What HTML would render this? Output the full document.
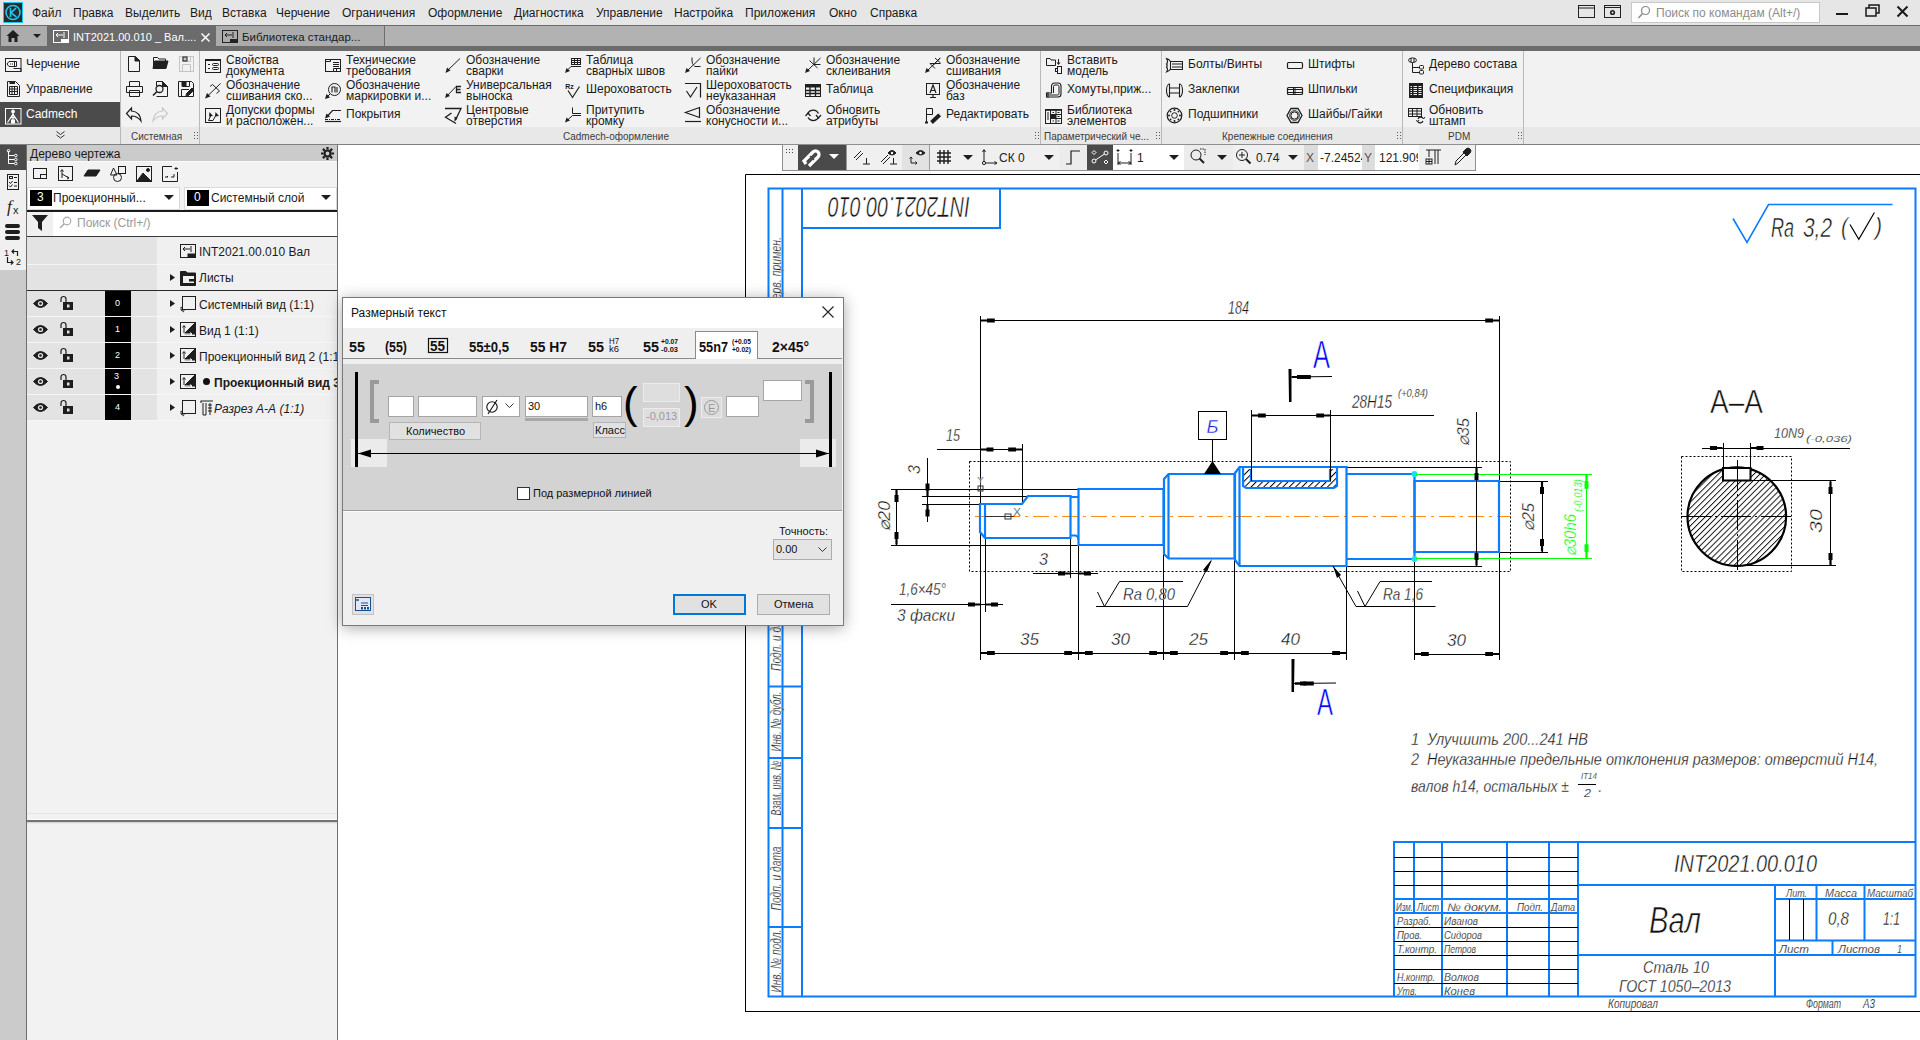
<!DOCTYPE html>
<html><head><meta charset="utf-8"><title>KOMPAS</title>
<style>
html,body{margin:0;padding:0;width:1920px;height:1040px;overflow:hidden;background:#fff;}
body{position:relative;font-family:"Liberation Sans",sans-serif;color:#000;}
.a{position:absolute;}
.t{position:absolute;white-space:nowrap;}
svg{position:absolute;overflow:visible;}

.menu{left:0;top:0;width:1920px;height:25px;background:#e6e6e6;}
.mi{font-size:12px;top:6px;color:#1a1a1a;}
.tabbar{left:0;top:25px;width:1920px;height:26px;background:#b2b2b2;}
.ribbon{left:0;top:51px;width:1920px;height:94px;background:#f2f2f2;}
.rlab{left:0;top:127px;width:1920px;height:17px;background:#e8e8e8;}
.rt{font-size:12px;line-height:11px;color:#1a1a1a;}
.gl{font-size:10px;color:#3c3c3c;top:131px;}
.sep{top:51px;width:1px;height:93px;background:#b9b9b9;}
.grip{width:6px;height:10px;top:131px;background-image:radial-gradient(circle,#555 0.8px,transparent 1px);background-size:3px 3px;}



.pt{font-size:12px;color:#1a1a1a;margin-top:1px;}





.dlg{left:342px;top:297px;width:502px;height:329px;background:#f0f0f0;border:1px solid #7a7a7a;box-sizing:border-box;box-shadow:0 2px 14px rgba(0,0,0,0.34);}
.ib{position:absolute;background:#fff;border:1px solid #a5a5a5;box-sizing:border-box;}
.dt{font-size:11px;color:#111;position:absolute;white-space:nowrap;}

</style></head><body>
<div class="a menu"></div>
<div class="a" style="left:3px;top:2px;width:18px;height:19px;background:#2a2a2a;border:1px solid #1ec8f0;"></div>
<svg style="left:4px;top:3px" width="18" height="19" viewBox="0 0 18 19"><circle cx="9" cy="9.5" r="7" fill="none" stroke="#1ec8f0" stroke-width="1.6"/><path d="M6.5 5 V14 M12 5 L7 9.8 L12.5 14" fill="none" stroke="#1ec8f0" stroke-width="1.6"/></svg>
<div class="t mi" style="left:32px">Файл</div>
<div class="t mi" style="left:73px">Правка</div>
<div class="t mi" style="left:125px">Выделить</div>
<div class="t mi" style="left:190px">Вид</div>
<div class="t mi" style="left:222px">Вставка</div>
<div class="t mi" style="left:276px">Черчение</div>
<div class="t mi" style="left:342px">Ограничения</div>
<div class="t mi" style="left:428px">Оформление</div>
<div class="t mi" style="left:514px">Диагностика</div>
<div class="t mi" style="left:596px">Управление</div>
<div class="t mi" style="left:674px">Настройка</div>
<div class="t mi" style="left:745px">Приложения</div>
<div class="t mi" style="left:829px">Окно</div>
<div class="t mi" style="left:870px">Справка</div>
<svg style="left:1578px;top:5px" width="18" height="14"><rect x="0.5" y="0.5" width="16" height="12" fill="none" stroke="#222" stroke-width="1"/><line x1="0" y1="3" x2="17" y2="3" stroke="#222"/></svg>
<svg style="left:1604px;top:5px" width="18" height="14"><rect x="0.5" y="0.5" width="16" height="12" fill="none" stroke="#222" stroke-width="1"/><line x1="0" y1="2.5" x2="17" y2="2.5" stroke="#222"/><circle cx="8.5" cy="7.5" r="2.6" fill="#222"/><circle cx="8.5" cy="7.5" r="1" fill="#e6e6e6"/></svg>
<div class="a" style="left:1631px;top:2px;width:189px;height:21px;background:#fff;border:1px solid #c8c8c8;box-sizing:border-box;"></div>
<svg style="left:1637px;top:5px" width="14" height="15"><circle cx="8.5" cy="5.5" r="4" fill="none" stroke="#888" stroke-width="1.2"/><line x1="5.5" y1="8.5" x2="1.5" y2="13" stroke="#888" stroke-width="1.4"/></svg>
<div class="t" style="left:1656px;top:6px;font-size:12px;color:#8c8c8c">Поиск по командам (Alt+/)</div>
<div class="a" style="left:1836px;top:13px;width:12px;height:2px;background:#1a1a1a"></div>
<svg style="left:1865px;top:4px" width="16" height="14"><rect x="1" y="4" width="10" height="8" fill="none" stroke="#1a1a1a" stroke-width="1.5"/><path d="M4 4 V1 H14 V9 H11" fill="none" stroke="#1a1a1a" stroke-width="1.5"/></svg>
<svg style="left:1896px;top:5px" width="14" height="14"><path d="M1.5 1.5 L11.5 11.5 M11.5 1.5 L1.5 11.5" stroke="#1a1a1a" stroke-width="2"/></svg>
<div class="a tabbar"></div>
<div class="a" style="left:0;top:25px;width:216px;height:21px;background:#6b6b6b"></div>
<div class="a" style="left:0;top:46px;width:1920px;height:5px;background:#6b6b6b"></div>
<div class="a" style="left:0;top:25px;width:1920px;height:1px;background:#6b6b6b"></div>
<div class="a" style="left:1px;top:26px;width:46px;height:20px;background:#acacac"></div>
<svg style="left:6px;top:29px" width="14" height="14"><path d="M0.5 7 L7 1 L13.5 7 H11.5 V13 H8.5 V9 H5.5 V13 H2.5 V7 Z" fill="#1e1e1e"/></svg>
<svg style="left:33px;top:34px" width="8" height="5"><path d="M0 0 H8 L4 4 Z" fill="#1e1e1e"/></svg>
<svg style="left:53px;top:30px" width="17" height="14"><rect x="0.5" y="0.5" width="15" height="12" fill="none" stroke="#fff"/><rect x="8" y="9" width="7" height="3" fill="#fff"/><path d="M3 5 H10 M3 5 L5 3 M3 5 L5 7 M11 2 V8" stroke="#fff" fill="none"/></svg>
<div class="t" style="left:73px;top:31px;font-size:11px;color:#fff">INT2021.00.010 _ Вал....</div>
<svg style="left:201px;top:33px" width="9" height="9"><path d="M0.5 0.5 L8.5 8.5 M8.5 0.5 L0.5 8.5" stroke="#fff" stroke-width="1.5"/></svg>
<div class="a" style="left:216px;top:26px;width:168px;height:20px;background:#ababab"></div>
<div class="a" style="left:384px;top:26px;width:1px;height:20px;background:#6e6e6e"></div>
<svg style="left:222px;top:30px" width="17" height="14"><rect x="0.5" y="0.5" width="15" height="12" fill="none" stroke="#222"/><rect x="8" y="9" width="7" height="3" fill="#222"/><path d="M3 5 H10 M3 5 L5 3 M3 5 L5 7 M11 2 V8" stroke="#222" fill="none"/></svg>
<div class="t" style="left:242px;top:31px;font-size:11.5px;color:#1a1a1a">Библиотека стандар...</div>
<div class="a ribbon"></div>
<div class="a rlab"></div>
<div class="a" style="left:0;top:144px;width:1920px;height:1px;background:#7f7f7f"></div>
<div class="a sep" style="left:120px"></div>
<div class="a sep" style="left:199px"></div>
<div class="a sep" style="left:1040px"></div>
<div class="a sep" style="left:1161px"></div>
<div class="a sep" style="left:1402px"></div>
<div class="a sep" style="left:1523px"></div>
<div class="a" style="left:0;top:102px;width:120px;height:25px;background:#4b4b4b"></div>
<div class="t rt" style="left:26px;top:59px;font-size:12px">Черчение</div>
<div class="t rt" style="left:26px;top:84px;font-size:12px">Управление</div>
<div class="t rt" style="left:26px;top:109px;font-size:12px;color:#fff">Cadmech</div>
<svg style="left:5px;top:58px" width="17" height="15" fill="none" stroke="#222"><rect x="0.5" y="0.5" width="15.5" height="13"/><path d="M4 3.5 H11.5 V8.5 H4 L2 6 Z M9.5 3.5 V8.5 M8.5 10.5 H16 V13.5"/><path d="M5 6 H8" stroke-dasharray="1,1"/></svg>
<svg style="left:7px;top:81px" width="13" height="17" fill="none" stroke="#222"><path d="M0.5 0.5 H8.5 L12.5 4.5 V15.5 H0.5 Z"/><path d="M2.5 2 H8" stroke-width="2"/><path d="M2.5 5.5 H10.5 V13.5 H2.5 Z M2.5 8 H10.5 M2.5 10.5 H10.5 M5 5.5 V13.5 M7.5 5.5 V13.5"/></svg>
<svg style="left:5px;top:108px" width="17" height="17" fill="none" stroke="#fff"><rect x="0.5" y="0.5" width="15.5" height="15.5"/><circle cx="8" cy="3.5" r="1.5" fill="#fff"/><path d="M8 5 V13 M8 6 L2.5 14.5 M8 6 L13.5 14.5 M5 10.5 Q8 8 11 10.5" stroke-width="1.2"/><rect x="6.5" y="12" width="3" height="3" fill="#fff"/></svg>
<svg style="left:56px;top:131px" width="9" height="8"><path d="M0.5 0.5 L4.5 3.5 L8.5 0.5 M0.5 4 L4.5 7 L8.5 4" stroke="#333" fill="none"/></svg>
<div class="t gl" style="left:131px">Системная</div>
<div class="t gl" style="left:563px">Cadmech-оформление</div>
<div class="t gl" style="left:1044px">Параметрический че...</div>
<div class="t gl" style="left:1222px">Крепежные соединения</div>
<div class="t gl" style="left:1448px">PDM</div>
<div class="a grip" style="left:193px"></div>
<div class="a grip" style="left:1034px"></div>
<div class="a grip" style="left:1155px"></div>
<div class="a grip" style="left:1396px"></div>
<div class="a grip" style="left:1517px"></div>
<svg style="left:127px;top:56px" width="17" height="17" viewBox="0 0 17 17" fill="none" stroke="#1e1e1e" stroke-width="1"><path d="M1.5 0.5 H8.5 L12.5 4.5 V15.5 H1.5 Z"/><path d="M8 0.5 L12.5 5 H8 Z" fill="#1e1e1e"/></svg>
<svg style="left:152px;top:56px" width="17" height="17" viewBox="0 0 17 17" fill="none" stroke="#1e1e1e" stroke-width="1"><path d="M1.5 12.5 V1.5 H5.5 L7 3 H13.5 V5"/><path d="M1 12.5 L2.5 5 H16 L14 12.5 Z" fill="#1e1e1e"/></svg>
<svg style="left:178px;top:56px" width="17" height="17" viewBox="0 0 17 17" fill="none" stroke="#1e1e1e" stroke-width="1"><g stroke="#c4c4c4"><rect x="1.5" y="0.5" width="14" height="15"/><path d="M4.5 0.5 V5.5 H12.5 V0.5 M4.5 15.5 V8.5 H12.5 V15.5"/></g><rect x="5" y="1" width="4" height="4" fill="#c4c4c4"/></svg>
<svg style="left:126px;top:81px" width="17" height="17" viewBox="0 0 17 17" fill="none" stroke="#1e1e1e" stroke-width="1"><path d="M3.5 5.5 V0.5 H13.5 V5.5 M0.5 5.5 H16.5 V11.5 H0.5 Z M3.5 9.5 V15.5 H13.5 V9.5 H3.5"/></svg>
<svg style="left:152px;top:81px" width="17" height="17" viewBox="0 0 17 17" fill="none" stroke="#1e1e1e" stroke-width="1"><path d="M4.5 5 V0.5 H10.5 L15.5 5.5 V15.5 H4.5"/><path d="M10.5 0.5 L15.5 5.5 H10.5 Z" fill="#1e1e1e"/><circle cx="7.5" cy="8" r="3.5" stroke-width="1.3"/><path d="M5 10.5 L1 14.5" stroke-width="1.6"/></svg>
<svg style="left:178px;top:81px" width="17" height="17" viewBox="0 0 17 17" fill="none" stroke="#1e1e1e" stroke-width="1"><path d="M0.5 0.5 H13.5 L15.5 2.5 V15.5 H0.5 Z M4.5 0.5 V5.5 H11.5 V0.5 M3.5 15.5 V8.5 H11"/><rect x="4" y="1" width="4" height="4" fill="#1e1e1e"/><path d="M8 15 L8.5 12.5 L14 7 L16 9 L10.5 14.5 Z" fill="#1e1e1e"/></svg>
<svg style="left:126px;top:107px" width="17" height="17" viewBox="0 0 17 17" fill="none" stroke="#1e1e1e" stroke-width="1"><path d="M5.5 1 L0.5 6.5 L5.5 12 V9 C9.5 9 12.5 10.5 15 14 C14.5 8.5 11 4.5 5.5 4 Z" stroke-width="1.2"/></svg>
<svg style="left:151px;top:107px" width="17" height="17" viewBox="0 0 17 17" fill="none" stroke="#1e1e1e" stroke-width="1"><path d="M11.5 1 L16.5 6.5 L11.5 12 V9 C7.5 9 4.5 10.5 2 14 C2.5 8.5 6 4.5 11.5 4 Z" stroke="#c8c8d0" stroke-width="1.2"/></svg>
<svg style="left:205px;top:57px" width="17" height="17" viewBox="0 0 17 17" fill="none" stroke="#1e1e1e" stroke-width="1"><rect x="0.5" y="2.5" width="15" height="13"/><rect x="0" y="2" width="16" height="2" fill="#1e1e1e" stroke="none"/><path d="M3 7.5 H5 M3 11.5 H5"/><rect x="7.5" y="6.5" width="6" height="2" rx="1"/><rect x="7.5" y="10.5" width="6" height="2" rx="1"/></svg>
<div class="t rt" style="left:226px;top:55px">Свойства<br>документа</div>
<svg style="left:205px;top:82px" width="17" height="17" viewBox="0 0 17 17" fill="none" stroke="#1e1e1e" stroke-width="1"><path d="M2 14.5 L15.5 1.5"/><path d="M0 16.5 L2 11 L5.5 14.5 Z" fill="#1e1e1e" stroke="none"/><path d="M5 4.5 L7.5 2.5 L14.5 9 L11.5 11.5"/></svg>
<div class="t rt" style="left:226px;top:80px">Обозначение<br>сшивания ско...</div>
<svg style="left:205px;top:107px" width="17" height="17" viewBox="0 0 17 17" fill="none" stroke="#1e1e1e" stroke-width="1"><rect x="0.5" y="1.5" width="15" height="14"/><path d="M3.5 13.5 H8 M3.5 13.5 L6 8 M8 13.5 L11 8"/><path d="M4.5 5 L4 9.5 L8 9 Z M10.5 5 L10 9.5 L14 9 Z" fill="#1e1e1e" stroke="none"/></svg>
<div class="t rt" style="left:226px;top:105px">Допуски формы<br>и расположен...</div>
<svg style="left:325px;top:57px" width="17" height="17" viewBox="0 0 17 17" fill="none" stroke="#1e1e1e" stroke-width="1"><rect x="0.5" y="2.5" width="15" height="12"/><path d="M0.5 4.5 H5.5 V2.5 M8 5.5 H14 M8 7.5 H14 M8 9.5 H14 M8.5 11.5 H15.5 M8.5 11.5 V14.5 M11.5 11.5 V14.5"/></svg>
<div class="t rt" style="left:346px;top:55px">Технические<br>требования</div>
<svg style="left:325px;top:82px" width="17" height="17" viewBox="0 0 17 17" fill="none" stroke="#1e1e1e" stroke-width="1"><circle cx="9.5" cy="7.5" r="6"/><path d="M7 10.5 V5 H10 V10.5 M12 5 V10.5" stroke-width="1.1"/><path d="M5 12 L1.5 15.5"/><path d="M0 17 L1.5 12 L5 15.5 Z" fill="#1e1e1e" stroke="none"/></svg>
<div class="t rt" style="left:346px;top:80px">Обозначение<br>маркировки и...</div>
<svg style="left:325px;top:107px" width="17" height="17" viewBox="0 0 17 17" fill="none" stroke="#1e1e1e" stroke-width="1"><path d="M2 9.5 L7.5 3.5 H16" stroke-width="1.2"/><path d="M0 11.5 L1.5 6.5 L5 9.5 Z" fill="#1e1e1e" stroke="none"/><path d="M0 12.5 H16" stroke-dasharray="3,1,1,1" stroke-width="1.1"/><path d="M0 14.5 H16" stroke-width="1.2"/></svg>
<div class="t rt" style="left:346px;top:109px">Покрытия</div>
<svg style="left:445px;top:57px" width="17" height="17" viewBox="0 0 17 17" fill="none" stroke="#1e1e1e" stroke-width="1"><path d="M2 14 L15 1.5"/><path d="M0.5 16 L2 10.5 L5.5 13.5 Z" fill="#1e1e1e" stroke="none"/></svg>
<div class="t rt" style="left:466px;top:55px">Обозначение<br>сварки</div>
<svg style="left:445px;top:82px" width="17" height="17" viewBox="0 0 17 17" fill="none" stroke="#1e1e1e" stroke-width="1"><path d="M2 14 L11 4.5"/><path d="M0 16 L1.5 11 L5 14 Z" fill="#1e1e1e" stroke="none"/><path d="M16 4.5 H11.5 V10.5 H16 M11.5 7.5 H15.5" stroke-width="1.3"/></svg>
<div class="t rt" style="left:466px;top:80px">Универсальная<br>выноска</div>
<svg style="left:445px;top:107px" width="17" height="17" viewBox="0 0 17 17" fill="none" stroke="#1e1e1e" stroke-width="1"><path d="M0 1.5 H16 L10.5 13" stroke-width="1.3"/><path d="M6.5 6 L0.5 10.3 L11 16.5" stroke-width="1.3"/><path d="M9.5 15 L9.5 9.5 L12.5 11 Z" fill="#1e1e1e" stroke="none"/></svg>
<div class="t rt" style="left:466px;top:105px">Центровые<br>отверстия</div>
<svg style="left:565px;top:57px" width="17" height="17" viewBox="0 0 17 17" fill="none" stroke="#1e1e1e" stroke-width="1"><rect x="6.5" y="1.5" width="9" height="6"/><path d="M6.5 3.5 H15.5 M6.5 5.5 H15.5 M9.5 1.5 V7.5 M12.5 1.5 V7.5 M6 9.5 H16 M6 9.5 L2 13.5"/><path d="M0 16 L1.5 11 L5 14 Z" fill="#1e1e1e" stroke="none"/></svg>
<div class="t rt" style="left:586px;top:55px">Таблица<br>сварных швов</div>
<svg style="left:565px;top:82px" width="17" height="17" viewBox="0 0 17 17" fill="none" stroke="#1e1e1e" stroke-width="1"><path d="M3 8.5 L7.5 15.5 L14.5 4.5" stroke-width="1.2"/><text x="0.3" y="6.8" font-size="8" font-weight="bold" fill="#1e1e1e" stroke="none" font-family="Liberation Sans" textLength="8.5" lengthAdjust="spacingAndGlyphs">Rz</text></svg>
<div class="t rt" style="left:586px;top:84px">Шероховатость</div>
<svg style="left:565px;top:107px" width="17" height="17" viewBox="0 0 17 17" fill="none" stroke="#1e1e1e" stroke-width="1"><path d="M7.5 0.5 V6.5 H16 M7.5 8.5 H16 M7.5 8.5 L2.5 13"/><path d="M0 15.5 L1.5 10.5 L5 13.5 Z" fill="#1e1e1e" stroke="none"/></svg>
<div class="t rt" style="left:586px;top:105px">Притупить<br>кромку</div>
<svg style="left:685px;top:57px" width="17" height="17" viewBox="0 0 17 17" fill="none" stroke="#1e1e1e" stroke-width="1"><path d="M2 14 L15.5 1"/><path d="M0 16 L1.5 11 L5 14 Z" fill="#1e1e1e" stroke="none"/><path d="M7 0.5 V4 Q7 7 9 8.5 M9.5 9.5 H15.5"/></svg>
<div class="t rt" style="left:706px;top:55px">Обозначение<br>пайки</div>
<svg style="left:685px;top:82px" width="17" height="17" viewBox="0 0 17 17" fill="none" stroke="#1e1e1e" stroke-width="1"><path d="M0 1.5 H15.5 V15.5" stroke-width="1.2"/><path d="M1.5 9 L5.5 15 L12 5" stroke-width="1.2"/></svg>
<div class="t rt" style="left:706px;top:80px">Шероховатость<br>неуказанная</div>
<svg style="left:685px;top:107px" width="17" height="17" viewBox="0 0 17 17" fill="none" stroke="#1e1e1e" stroke-width="1"><path d="M14.5 0.5 V10.5 L0.5 5.5 Z" stroke-width="1.2"/><path d="M0 14.5 H16" stroke-width="1.2"/></svg>
<div class="t rt" style="left:706px;top:105px">Обозначение<br>конусности и...</div>
<svg style="left:805px;top:57px" width="17" height="17" viewBox="0 0 17 17" fill="none" stroke="#1e1e1e" stroke-width="1"><path d="M2 14 L15.5 1"/><path d="M0 16 L1.5 11 L5 14 Z" fill="#1e1e1e" stroke="none"/><path d="M9 0.5 V7.5 M9 7.5 H15.5 M4.5 3.5 L12.5 11"/></svg>
<div class="t rt" style="left:826px;top:55px">Обозначение<br>склеивания</div>
<svg style="left:805px;top:82px" width="17" height="17" viewBox="0 0 17 17" fill="none" stroke="#1e1e1e" stroke-width="1"><rect x="0.5" y="2.5" width="15" height="12"/><rect x="0" y="2" width="16" height="3.5" fill="#1e1e1e" stroke="none"/><path d="M0.5 8.5 H15.5 M0.5 11.5 H15.5 M5 5 V14.5 M10.5 5 V14.5" stroke-width="1.3"/></svg>
<div class="t rt" style="left:826px;top:84px">Таблица</div>
<svg style="left:805px;top:107px" width="17" height="17" viewBox="0 0 17 17" fill="none" stroke="#1e1e1e" stroke-width="1"><path d="M3 6 A6 6 0 0 1 13.5 6.5 M13.5 10.5 A6 6 0 0 1 3 10.5" stroke-width="1.2"/><path d="M11 8 L13.5 11 L16 8 M0.5 9 L3 6 L5.5 9" stroke-width="1.2"/></svg>
<div class="t rt" style="left:826px;top:105px">Обновить<br>атрибуты</div>
<svg style="left:925px;top:57px" width="17" height="17" viewBox="0 0 17 17" fill="none" stroke="#1e1e1e" stroke-width="1"><path d="M2 14 L15.5 1"/><path d="M0 16 L1.5 11 L5 14 Z" fill="#1e1e1e" stroke="none"/><path d="M10 1 L15.5 6 M15 1 L10 6 M5 6.5 H15.5 M5 6.5 L10 11.5 M7 9 L10.5 6"/></svg>
<div class="t rt" style="left:946px;top:55px">Обозначение<br>сшивания</div>
<svg style="left:925px;top:82px" width="17" height="17" viewBox="0 0 17 17" fill="none" stroke="#1e1e1e" stroke-width="1"><rect x="1.5" y="1.5" width="13" height="11"/><path d="M5 11 L8 3 L11 11 M6 8.5 H10 M8 12.5 V15.5 M5 15.5 H11" stroke-width="1.2"/></svg>
<div class="t rt" style="left:946px;top:80px">Обозначение<br>баз</div>
<svg style="left:925px;top:107px" width="17" height="17" viewBox="0 0 17 17" fill="none" stroke="#1e1e1e" stroke-width="1"><path d="M1.5 16 V1.5 H7.5 V7.5 H1.5"/><rect x="0" y="14.5" width="3" height="2" fill="#1e1e1e" stroke="none"/><path d="M6.5 15.5 L15 7.5" stroke-width="3.8"/><path d="M13 6 L16.5 9.5" stroke="#f2f2f2" stroke-width="0.8"/></svg>
<div class="t rt" style="left:946px;top:109px">Редактировать</div>
<svg style="left:1045px;top:57px" width="17" height="17" viewBox="0 0 17 17" fill="none" stroke="#1e1e1e" stroke-width="1"><path d="M1.5 8.5 V1.5 H5 L6 3 H10.5 V8.5 Z"/><path d="M13.5 2 V6"/><path d="M11.5 5.5 H15.5 L13.5 8 Z" fill="#1e1e1e" stroke="none"/><rect x="12.5" y="9.5" width="4" height="7"/><rect x="10.5" y="11.5" width="2" height="3"/></svg>
<div class="t rt" style="left:1067px;top:55px">Вставить<br>модель</div>
<svg style="left:1045px;top:82px" width="17" height="17" viewBox="0 0 17 17" fill="none" stroke="#1e1e1e" stroke-width="1"><path d="M6.5 11 V4 A3 3 0 0 1 9.5 1 H13 A3 3 0 0 1 16 4 V12 A3 3 0 0 1 13 15 H1.5 V11 H6.5 Z" stroke-width="1.1"/><path d="M8.5 11 V4.5 A1.5 1.5 0 0 1 10 3 H12.5 A1.5 1.5 0 0 1 14 4.5 V11.5 A1.5 1.5 0 0 1 12.5 13 H1.5 M3 10 V16" stroke-width="1"/></svg>
<div class="t rt" style="left:1067px;top:84px">Хомуты,приж...</div>
<svg style="left:1045px;top:107px" width="17" height="17" viewBox="0 0 17 17" fill="none" stroke="#1e1e1e" stroke-width="1"><rect x="0.5" y="2.5" width="16" height="14"/><rect x="0" y="2" width="17" height="1.8" fill="#1e1e1e" stroke="none"/><path d="M5.5 3 V16.5 M11 3 V16.5 M5.5 7.5 H16.5 M5.5 11.5 H16.5"/><rect x="6" y="8" width="5" height="3.5" fill="#1e1e1e" stroke="none"/><path d="M2 6 H4 M2 8 H4 M2 10 H4 M2 12 H4 M7.5 5.5 H9 M12.5 5.5 H14.5 M12.5 9.5 H14.5 M7.5 14 H9 M12.5 14 H14.5" stroke-width="1.1"/></svg>
<div class="t rt" style="left:1067px;top:105px">Библиотека<br>элементов</div>
<svg style="left:1166px;top:57px" width="17" height="17" viewBox="0 0 17 17" fill="none" stroke="#1e1e1e" stroke-width="1"><path d="M0.5 1.5 Q3 2 4.5 4.5 V12 Q3 14.5 0.5 15 Q2.5 12 0.5 10 Q2 8.5 0.5 7 Q2.5 5 0.5 1.5 Z" stroke-width="1.1"/><rect x="4.5" y="4.5" width="12" height="8"/><path d="M6 7 H16.5 M6 10 H16.5"/></svg>
<div class="t rt" style="left:1188px;top:59px">Болты/Винты</div>
<svg style="left:1166px;top:82px" width="17" height="17" viewBox="0 0 17 17" fill="none" stroke="#1e1e1e" stroke-width="1"><path d="M3.5 2 A3 6.5 0 0 0 3.5 15 V2 Z M13.5 2 A3 6.5 0 0 1 13.5 15 V2 Z" stroke-width="1.1"/><path d="M3.5 6 H13.5 M3.5 11 H13.5" stroke-width="1.2"/></svg>
<div class="t rt" style="left:1188px;top:84px">Заклепки</div>
<svg style="left:1166px;top:107px" width="17" height="17" viewBox="0 0 17 17" fill="none" stroke="#1e1e1e" stroke-width="1"><circle cx="8.5" cy="8.5" r="7.3" stroke-width="1.2"/><circle cx="8.5" cy="8.5" r="2.8"/><g fill="#1e1e1e" stroke="none"><circle cx="8.5" cy="3" r="1"/><circle cx="8.5" cy="14" r="1"/><circle cx="3" cy="8.5" r="1"/><circle cx="14" cy="8.5" r="1"/><circle cx="4.6" cy="4.6" r="0.9"/><circle cx="12.4" cy="12.4" r="0.9"/><circle cx="12.4" cy="4.6" r="0.9"/><circle cx="4.6" cy="12.4" r="0.9"/></g></svg>
<div class="t rt" style="left:1188px;top:109px">Подшипники</div>
<svg style="left:1284px;top:57px" width="17" height="17" viewBox="0 0 17 17" fill="none" stroke="#1e1e1e" stroke-width="1"><rect x="3.5" y="5.5" width="15" height="6" rx="1.2" stroke-width="1.2"/></svg>
<div class="t rt" style="left:1308px;top:59px">Штифты</div>
<svg style="left:1284px;top:82px" width="17" height="17" viewBox="0 0 17 17" fill="none" stroke="#1e1e1e" stroke-width="1"><rect x="3.5" y="5.5" width="15" height="7" rx="1" stroke-width="1.2"/><path d="M3.5 7.5 H18.5 M3.5 10.5 H18.5 M9.5 5.5 V12.5 M11 5.5 V12.5"/></svg>
<div class="t rt" style="left:1308px;top:84px">Шпильки</div>
<svg style="left:1284px;top:107px" width="17" height="17" viewBox="0 0 17 17" fill="none" stroke="#1e1e1e" stroke-width="1"><path d="M7 1.5 H14 L18 8.5 L14 15.5 H7 L3 8.5 Z" stroke-width="1.3"/><circle cx="10.5" cy="8.5" r="4.8"/><circle cx="10.5" cy="8.5" r="3.6"/></svg>
<div class="t rt" style="left:1308px;top:109px">Шайбы/Гайки</div>
<svg style="left:1408px;top:57px" width="17" height="17" viewBox="0 0 17 17" fill="none" stroke="#1e1e1e" stroke-width="1"><ellipse cx="4.5" cy="3.2" rx="4" ry="2.3"/><path d="M3 1.2 V5.2 M6 1.2 V5.2 M4.5 5.5 V15.5 H11 M4.5 10.5 H11"/><rect x="11.5" y="8.5" width="4" height="3.5" rx="1"/><rect x="11.5" y="13.5" width="4" height="3.5" rx="1"/></svg>
<div class="t rt" style="left:1429px;top:59px">Дерево состава</div>
<svg style="left:1408px;top:82px" width="17" height="17" viewBox="0 0 17 17" fill="none" stroke="#1e1e1e" stroke-width="1"><rect x="1" y="1" width="14" height="15" fill="#1e1e1e" stroke="none"/><path d="M2.5 4.5 H4 M5.5 4.5 H9 M10.5 4.5 H13.5 M2.5 6.5 H4 M5.5 6.5 H9 M10.5 6.5 H13.5 M2.5 8.5 H4 M5.5 8.5 H9 M10.5 8.5 H13.5 M2.5 10.5 H4 M5.5 10.5 H9 M10.5 10.5 H13.5 M2.5 12.5 H4 M5.5 12.5 H9 M10.5 12.5 H13.5" stroke="#f2f2f2"/></svg>
<div class="t rt" style="left:1429px;top:84px">Спецификация</div>
<svg style="left:1408px;top:107px" width="17" height="17" viewBox="0 0 17 17" fill="none" stroke="#1e1e1e" stroke-width="1"><rect x="0.5" y="1.5" width="13" height="8"/><path d="M0.5 4 H13.5 M0.5 7 H13.5 M4.5 1.5 V9.5 M9 1.5 V9.5"/><path d="M10 12 A3 3 0 0 1 15 11 M15 14 A3 3 0 0 1 10 15" stroke-width="1.2"/><path d="M14 10 L15.5 12 L17 10 M11 13 L9.5 15 L8.5 13" stroke-width="1"/></svg>
<div class="t rt" style="left:1429px;top:105px">Обновить<br>штамп</div>
<div class="a" style="left:0;top:145px;width:26px;height:895px;background:#cbcbcb"></div>
<div class="a" style="left:0;top:170px;width:26px;height:100px;background:#f0f0f0"></div>
<div class="a" style="left:0;top:145px;width:26px;height:25px;background:#4b4b4b"></div>
<div class="a" style="left:26px;top:145px;width:1px;height:895px;background:#6e6e6e"></div>
<svg style="left:6px;top:149px" width="13" height="17" viewBox="0 0 13 17" fill="none" stroke="#1e1e1e" stroke-width="1" ><path d="M2.5 2 V14.5 H8 M2.5 6.5 H8 M2.5 10.5 H8" stroke="#fff"/><circle cx="2.5" cy="1.8" r="1.3" stroke="#fff"/><circle cx="9.8" cy="6.5" r="1.3" stroke="#fff"/><circle cx="9.8" cy="10.5" r="1.3" stroke="#fff"/><circle cx="9.8" cy="14.5" r="1.3" stroke="#fff"/></svg>
<svg style="left:7px;top:174px" width="13" height="16" viewBox="0 0 13 16" fill="none" stroke="#1e1e1e" stroke-width="1" ><rect x="0.5" y="0.5" width="11" height="15"/><rect x="2.5" y="2.5" width="3" height="2"/><path d="M7 3.5 H10 M2 8 L3.5 9.5 L5.5 7 M7 8.5 H10 M2 11.5 L3.5 13 L5.5 10.5 M7 12 H10"/></svg>
<div class="t" style="left:7px;top:197px;font-family:'Liberation Serif',serif;font-style:italic;font-size:17px;color:#222">f</div>
<div class="t" style="left:13px;top:204px;font-size:11px;color:#222">x</div>
<div class="a" style="left:5px;top:224px;width:15px;height:4px;background:#1e1e1e;border-radius:2px"></div>
<div class="a" style="left:5px;top:230px;width:15px;height:4px;background:#1e1e1e;border-radius:2px"></div>
<div class="a" style="left:5px;top:236px;width:15px;height:4px;background:#1e1e1e;border-radius:2px"></div>
<div class="t" style="left:4px;top:248px;font-size:9px;color:#222">1</div>
<div class="t" style="left:16px;top:257px;font-size:9px;color:#222">2</div>
<svg style="left:0px;top:245px" width="26" height="24" viewBox="0 0 26 24" fill="none" stroke="#1e1e1e" stroke-width="1" ><path d="M17.5 11 V6.5 H12 M14 4.5 L12 6.5 L14 8.5 M7.5 12 V17.5 H13 M11 15.5 L13 17.5 L11 19.5" stroke-width="1.2"/></svg>
<div class="a" style="left:27px;top:145px;width:310px;height:895px;background:#f2f2f2"></div>
<div class="a" style="left:337px;top:145px;width:1px;height:895px;background:#707070"></div>
<div class="a" style="left:27px;top:145px;width:310px;height:16px;background:#cbcbcb"></div>
<div class="t pt" style="left:30px;top:146px">Дерево чертежа</div>
<svg style="left:320px;top:146px" width="15" height="15" viewBox="0 0 15 15" fill="none" stroke="#1e1e1e" stroke-width="1" ><circle cx="7.5" cy="7.5" r="3" stroke-width="2.2"/><path d="M7.5 1 V3.5 M7.5 11.5 V14 M1 7.5 H3.5 M11.5 7.5 H14 M2.9 2.9 L4.6 4.6 M10.4 10.4 L12.1 12.1 M12.1 2.9 L10.4 4.6 M4.6 10.4 L2.9 12.1" stroke-width="2.2"/></svg>
<div class="a" style="left:27px;top:161px;width:310px;height:1px;background:#fafafa"></div>
<svg style="left:33px;top:168px" width="15" height="12" viewBox="0 0 15 12" fill="none" stroke="#1e1e1e" stroke-width="1" ><rect x="0.5" y="0.5" width="13" height="10"/><rect x="7.5" y="6.5" width="6" height="4"/></svg>
<svg style="left:58px;top:166px" width="16" height="16" viewBox="0 0 16 16" fill="none" stroke="#1e1e1e" stroke-width="1" ><rect x="0.5" y="0.5" width="14" height="14"/><path d="M4 12 V4 M2.5 5.5 L4 3.5 L5.5 5.5 M4 8 L11 12 M9 10.5 L11 12 L9 13"/></svg>
<svg style="left:84px;top:170px" width="17" height="7" viewBox="0 0 17 7" fill="none" stroke="#1e1e1e" stroke-width="1" ><path d="M4 0 H16 L12 6 H0 Z" fill="#1e1e1e"/></svg>
<svg style="left:110px;top:166px" width="17" height="17" viewBox="0 0 17 17" fill="none" stroke="#1e1e1e" stroke-width="1" ><path d="M3.5 2 L0.5 9 H7 Z"/><rect x="8.5" y="0.5" width="7" height="7"/><circle cx="7.5" cy="11.5" r="4"/></svg>
<svg style="left:136px;top:166px" width="17" height="16" viewBox="0 0 17 16" fill="none" stroke="#1e1e1e" stroke-width="1" ><rect x="0.5" y="0.5" width="15" height="15"/><path d="M1 15 L7 7 L15 15 Z" fill="#1e1e1e"/><circle cx="12" cy="4" r="1.5" fill="#1e1e1e"/></svg>
<svg style="left:162px;top:166px" width="17" height="16" viewBox="0 0 17 16" fill="none" stroke="#1e1e1e" stroke-width="1" ><path d="M10 0.5 H0.5 V15.5 H15.5 V6"/><path d="M14 1 V4 M12.5 2.5 H16 M3 11 H6 L5 10 M9 11 L12 11 V8"/></svg>
<div class="a" style="left:27px;top:187px;width:153px;height:23px;background:#fff;border:1px solid #d9d9d9;box-sizing:border-box"></div>
<div class="a" style="left:184px;top:187px;width:153px;height:23px;background:#fff;border:1px solid #d9d9d9;box-sizing:border-box"></div>
<div class="a" style="left:30px;top:190px;width:22px;height:16px;background:#000"></div>
<div class="t" style="left:37px;top:190px;font-size:12px;color:#fff">3</div>
<div class="t pt" style="left:53px;top:190px">Проекционный...</div>
<svg style="left:164px;top:195px" width="11" height="6" viewBox="0 0 11 6" fill="none" stroke="#1e1e1e" stroke-width="1" ><path d="M0 0 H10 L5 5 Z" fill="#1e1e1e" stroke="none"/></svg>
<div class="a" style="left:187px;top:190px;width:22px;height:16px;background:#000"></div>
<div class="t" style="left:194px;top:190px;font-size:12px;color:#fff">0</div>
<div class="t pt" style="left:211px;top:190px">Системный слой</div>
<svg style="left:321px;top:195px" width="11" height="6" viewBox="0 0 11 6" fill="none" stroke="#1e1e1e" stroke-width="1" ><path d="M0 0 H10 L5 5 Z" fill="#1e1e1e" stroke="none"/></svg>
<div class="a" style="left:27px;top:210px;width:310px;height:2px;background:#1a1a1a"></div>
<div class="a" style="left:27px;top:212px;width:310px;height:24px;background:#fff"></div>
<div class="a" style="left:27px;top:212px;width:26px;height:24px;background:#f0f0f0"></div>
<svg style="left:32px;top:215px" width="17" height="17" viewBox="0 0 17 17" fill="none" stroke="#1e1e1e" stroke-width="1" ><path d="M0 0 H16 L10 7 V16 L6 13 V7 Z" fill="#1e1e1e" stroke="none"/></svg>
<svg style="left:59px;top:216px" width="13" height="14" viewBox="0 0 13 14" fill="none" stroke="#1e1e1e" stroke-width="1" ><circle cx="8" cy="5" r="3.8" stroke="#aaa" stroke-width="1.2"/><path d="M5.3 7.7 L1 12" stroke="#aaa" stroke-width="1.5"/></svg>
<div class="t" style="left:77px;top:216px;font-size:12px;color:#9a9a9a">Поиск (Ctrl+/)</div>
<div class="a" style="left:27px;top:236px;width:310px;height:1px;background:#3a3a3a"></div>
<div class="a" style="left:27px;top:237px;width:130px;height:183px;background:#e3e3e3"></div>
<div class="a" style="left:157px;top:237px;width:180px;height:183px;background:#f0f0f0"></div>
<div class="a" style="left:27px;top:264px;width:310px;height:1px;background:#f6f6f6"></div>
<div class="a" style="left:27px;top:316px;width:310px;height:1px;background:#f6f6f6"></div>
<div class="a" style="left:27px;top:342px;width:310px;height:1px;background:#f6f6f6"></div>
<div class="a" style="left:27px;top:368px;width:310px;height:1px;background:#f6f6f6"></div>
<div class="a" style="left:27px;top:394px;width:310px;height:1px;background:#f6f6f6"></div>
<div class="a" style="left:27px;top:420px;width:310px;height:1px;background:#f6f6f6"></div>
<div class="a" style="left:27px;top:290px;width:310px;height:1px;background:#2a2a2a"></div>
<svg style="left:180px;top:244px" width="17" height="15" viewBox="0 0 17 15" fill="none" stroke="#1e1e1e" stroke-width="1" ><rect x="0.5" y="0.5" width="15" height="13"/><rect x="8" y="10" width="7" height="3" fill="#1e1e1e"/><path d="M3 5 H10 M3 5 L5 3 M3 5 L5 7 M11 2 V8"/></svg>
<div class="t pt" style="left:199px;top:244px">INT2021.00.010 Вал</div>
<svg style="left:170px;top:274px" width="6" height="8" viewBox="0 0 6 8" fill="none" stroke="#1e1e1e" stroke-width="1" ><path d="M0 0 L5 3.5 L0 7 Z" fill="#1e1e1e" stroke="none"/></svg>
<svg style="left:180px;top:271px" width="17" height="15" viewBox="0 0 17 15" fill="none" stroke="#1e1e1e" stroke-width="1" ><path d="M0.5 14.5 V0.5 H6 L7.5 2 H15.5 V14.5 Z" fill="#1e1e1e"/><rect x="3" y="5" width="11" height="7" fill="#f0f0f0" stroke="none"/><rect x="9" y="8" width="5" height="2.5" fill="#1e1e1e" stroke="none"/></svg>
<div class="t pt" style="left:199px;top:270px">Листы</div>
<div class="a" style="left:105px;top:291px;width:26px;height:25px;background:#000"></div>
<div class="t" style="left:115px;top:298px;font-size:9px;color:#fff">0</div>
<svg style="left:33px;top:298px" width="15" height="11" viewBox="0 0 15 11" fill="none" stroke="#1e1e1e" stroke-width="1" ><path d="M0.5 5.5 Q7.5 -2.5 14.5 5.5 Q7.5 13.5 0.5 5.5 Z" fill="#1e1e1e"/><circle cx="7.5" cy="5.5" r="2.6" fill="#e3e3e3" stroke="none"/><circle cx="7.5" cy="5.5" r="1.3" fill="#1e1e1e" stroke="none"/></svg>
<svg style="left:60px;top:296px" width="14" height="15" viewBox="0 0 14 15" fill="none" stroke="#1e1e1e" stroke-width="1" ><path d="M1 6 V3 A2.5 2.5 0 0 1 6 3 V6" stroke-width="1.2"/><rect x="3" y="6" width="10" height="8" fill="#1e1e1e" stroke="none"/><rect x="7" y="8.5" width="2.5" height="3" fill="#e3e3e3" stroke="none"/></svg>
<svg style="left:170px;top:300px" width="6" height="8" viewBox="0 0 6 8" fill="none" stroke="#1e1e1e" stroke-width="1" ><path d="M0 0 L5 3.5 L0 7 Z" fill="#1e1e1e" stroke="none"/></svg>
<svg style="left:180px;top:296px" width="17" height="17" viewBox="0 0 17 17" fill="none" stroke="#1e1e1e" stroke-width="1" ><rect x="2.5" y="0.5" width="13" height="13"/><path d="M1 14 L4 16 M1 11 V14 H5 M3 12.5 L1 11" stroke-width="0.9"/></svg>
<div class="t pt" style="left:199px;top:297px;width:138px;overflow:hidden">Системный вид (1:1)</div>
<div class="a" style="left:105px;top:317px;width:26px;height:25px;background:#000"></div>
<div class="t" style="left:115px;top:324px;font-size:9px;color:#fff">1</div>
<svg style="left:33px;top:324px" width="15" height="11" viewBox="0 0 15 11" fill="none" stroke="#1e1e1e" stroke-width="1" ><path d="M0.5 5.5 Q7.5 -2.5 14.5 5.5 Q7.5 13.5 0.5 5.5 Z" fill="#1e1e1e"/><circle cx="7.5" cy="5.5" r="2.6" fill="#e3e3e3" stroke="none"/><circle cx="7.5" cy="5.5" r="1.3" fill="#1e1e1e" stroke="none"/></svg>
<svg style="left:60px;top:322px" width="14" height="15" viewBox="0 0 14 15" fill="none" stroke="#1e1e1e" stroke-width="1" ><path d="M1 6 V3 A2.5 2.5 0 0 1 6 3 V6" stroke-width="1.2"/><rect x="3" y="6" width="10" height="8" fill="#1e1e1e" stroke="none"/><rect x="7" y="8.5" width="2.5" height="3" fill="#e3e3e3" stroke="none"/></svg>
<svg style="left:170px;top:326px" width="6" height="8" viewBox="0 0 6 8" fill="none" stroke="#1e1e1e" stroke-width="1" ><path d="M0 0 L5 3.5 L0 7 Z" fill="#1e1e1e" stroke="none"/></svg>
<svg style="left:180px;top:322px" width="17" height="16" viewBox="0 0 17 16" fill="none" stroke="#1e1e1e" stroke-width="1" ><rect x="0.5" y="0.5" width="15" height="14"/><path d="M15 1 L4 12 H15 Z" fill="#1e1e1e"/><path d="M4 13 V5 M2.5 6.5 L4 4.5 L5.5 6.5 M4 12 H12 M10 10.5 L12 12 L10 13.5" stroke="#fff"/><path d="M4 11 V4 M2.5 5.5 L4 3.5 L5.5 5.5" /></svg>
<div class="t pt" style="left:199px;top:323px;width:138px;overflow:hidden">Вид 1 (1:1)</div>
<div class="a" style="left:105px;top:343px;width:26px;height:25px;background:#000"></div>
<div class="t" style="left:115px;top:350px;font-size:9px;color:#fff">2</div>
<svg style="left:33px;top:350px" width="15" height="11" viewBox="0 0 15 11" fill="none" stroke="#1e1e1e" stroke-width="1" ><path d="M0.5 5.5 Q7.5 -2.5 14.5 5.5 Q7.5 13.5 0.5 5.5 Z" fill="#1e1e1e"/><circle cx="7.5" cy="5.5" r="2.6" fill="#e3e3e3" stroke="none"/><circle cx="7.5" cy="5.5" r="1.3" fill="#1e1e1e" stroke="none"/></svg>
<svg style="left:60px;top:348px" width="14" height="15" viewBox="0 0 14 15" fill="none" stroke="#1e1e1e" stroke-width="1" ><path d="M1 6 V3 A2.5 2.5 0 0 1 6 3 V6" stroke-width="1.2"/><rect x="3" y="6" width="10" height="8" fill="#1e1e1e" stroke="none"/><rect x="7" y="8.5" width="2.5" height="3" fill="#e3e3e3" stroke="none"/></svg>
<svg style="left:170px;top:352px" width="6" height="8" viewBox="0 0 6 8" fill="none" stroke="#1e1e1e" stroke-width="1" ><path d="M0 0 L5 3.5 L0 7 Z" fill="#1e1e1e" stroke="none"/></svg>
<svg style="left:180px;top:348px" width="17" height="16" viewBox="0 0 17 16" fill="none" stroke="#1e1e1e" stroke-width="1" ><rect x="0.5" y="0.5" width="15" height="14"/><path d="M15 1 L4 12 H15 Z" fill="#1e1e1e"/><path d="M4 13 V5 M2.5 6.5 L4 4.5 L5.5 6.5 M4 12 H12 M10 10.5 L12 12 L10 13.5" stroke="#fff"/><path d="M4 11 V4 M2.5 5.5 L4 3.5 L5.5 5.5" /></svg>
<div class="t pt" style="left:199px;top:349px;width:138px;overflow:hidden">Проекционный вид 2 (1:1)</div>
<div class="a" style="left:105px;top:369px;width:26px;height:25px;background:#000"></div>
<div class="t" style="left:114px;top:371px;font-size:9px;color:#fff">3</div><div class="a" style="left:116px;top:385px;width:4px;height:4px;border-radius:2px;background:#fff"></div>
<svg style="left:33px;top:376px" width="15" height="11" viewBox="0 0 15 11" fill="none" stroke="#1e1e1e" stroke-width="1" ><path d="M0.5 5.5 Q7.5 -2.5 14.5 5.5 Q7.5 13.5 0.5 5.5 Z" fill="#1e1e1e"/><circle cx="7.5" cy="5.5" r="2.6" fill="#e3e3e3" stroke="none"/><circle cx="7.5" cy="5.5" r="1.3" fill="#1e1e1e" stroke="none"/></svg>
<svg style="left:60px;top:374px" width="14" height="15" viewBox="0 0 14 15" fill="none" stroke="#1e1e1e" stroke-width="1" ><path d="M1 6 V3 A2.5 2.5 0 0 1 6 3 V6" stroke-width="1.2"/><rect x="3" y="6" width="10" height="8" fill="#1e1e1e" stroke="none"/><rect x="7" y="8.5" width="2.5" height="3" fill="#e3e3e3" stroke="none"/></svg>
<svg style="left:170px;top:378px" width="6" height="8" viewBox="0 0 6 8" fill="none" stroke="#1e1e1e" stroke-width="1" ><path d="M0 0 L5 3.5 L0 7 Z" fill="#1e1e1e" stroke="none"/></svg>
<svg style="left:180px;top:374px" width="17" height="16" viewBox="0 0 17 16" fill="none" stroke="#1e1e1e" stroke-width="1" ><rect x="0.5" y="0.5" width="15" height="14"/><path d="M15 1 L4 12 H15 Z" fill="#1e1e1e"/><path d="M4 13 V5 M2.5 6.5 L4 4.5 L5.5 6.5 M4 12 H12 M10 10.5 L12 12 L10 13.5" stroke="#fff"/><path d="M4 11 V4 M2.5 5.5 L4 3.5 L5.5 5.5" /></svg>
<div class="a" style="left:203px;top:378px;width:7px;height:7px;border-radius:4px;background:#111"></div>
<div class="t pt" style="left:214px;top:375px;font-weight:bold;width:123px;overflow:hidden">Проекционный вид 3 (1:1)</div>
<div class="a" style="left:105px;top:395px;width:26px;height:25px;background:#000"></div>
<div class="t" style="left:115px;top:402px;font-size:9px;color:#fff">4</div>
<svg style="left:33px;top:402px" width="15" height="11" viewBox="0 0 15 11" fill="none" stroke="#1e1e1e" stroke-width="1" ><path d="M0.5 5.5 Q7.5 -2.5 14.5 5.5 Q7.5 13.5 0.5 5.5 Z" fill="#1e1e1e"/><circle cx="7.5" cy="5.5" r="2.6" fill="#e3e3e3" stroke="none"/><circle cx="7.5" cy="5.5" r="1.3" fill="#1e1e1e" stroke="none"/></svg>
<svg style="left:60px;top:400px" width="14" height="15" viewBox="0 0 14 15" fill="none" stroke="#1e1e1e" stroke-width="1" ><path d="M1 6 V3 A2.5 2.5 0 0 1 6 3 V6" stroke-width="1.2"/><rect x="3" y="6" width="10" height="8" fill="#1e1e1e" stroke="none"/><rect x="7" y="8.5" width="2.5" height="3" fill="#e3e3e3" stroke="none"/></svg>
<svg style="left:170px;top:404px" width="6" height="8" viewBox="0 0 6 8" fill="none" stroke="#1e1e1e" stroke-width="1" ><path d="M0 0 L5 3.5 L0 7 Z" fill="#1e1e1e" stroke="none"/></svg>
<svg style="left:180px;top:400px" width="17" height="17" viewBox="0 0 17 17" fill="none" stroke="#1e1e1e" stroke-width="1" ><rect x="2.5" y="0.5" width="13" height="13"/><path d="M1 14 L4 16 M1 11 V14 H5 M3 12.5 L1 11" stroke-width="0.9"/></svg>
<svg style="left:200px;top:400px" width="14" height="16" viewBox="0 0 14 16" fill="none" stroke="#1e1e1e" stroke-width="1" ><path d="M0.5 1 H13 M1 1 V3 M3 3 V15 H6 V3 M10 3 V15 M8 5 H12 M8 8 H12 M8 11 H12" /></svg>
<div class="t pt" style="left:214px;top:401px;font-style:italic;width:123px;overflow:hidden">Разрез А-А (1:1)</div>
<div class="a" style="left:27px;top:813px;width:310px;height:1px;background:#e6e6e6"></div>
<div class="a" style="left:27px;top:819px;width:310px;height:1px;background:#fbfbfb"></div>
<div class="a" style="left:27px;top:820px;width:310px;height:2px;background:#747474"></div>
<div class="a" style="left:27px;top:822px;width:310px;height:2px;background:linear-gradient(#cfcfcf,#f2f2f2)"></div>
<div class="a" style="left:338px;top:145px;width:1582px;height:895px;background:#fff"></div>
<svg style="left:0;top:0" width="1920" height="1040" viewBox="0 0 1920 1040">
<path d="M745.5 1011.5 V174.5 H1920" stroke="#000" stroke-width="1" fill="none" />
<line x1="745" y1="1011.5" x2="1920" y2="1011.5" stroke="#000" stroke-width="1" />
<path d="M768.5 996.5 V188.5 H1915.5 V996.5 Z" stroke="#0a7cff" stroke-width="2" fill="none" />
<line x1="782.5" y1="188" x2="782.5" y2="996.5" stroke="#0a7cff" stroke-width="2" />
<line x1="802" y1="188" x2="802" y2="996.5" stroke="#0a7cff" stroke-width="2" />
<path d="M802 228 H1000 V188" stroke="#0a7cff" stroke-width="2" fill="none" />
<line x1="768" y1="686.5" x2="802" y2="686.5" stroke="#0a7cff" stroke-width="2" />
<line x1="768" y1="758" x2="802" y2="758" stroke="#0a7cff" stroke-width="2" />
<line x1="768" y1="828" x2="802" y2="828" stroke="#0a7cff" stroke-width="2" />
<line x1="768" y1="927" x2="802" y2="927" stroke="#0a7cff" stroke-width="2" />
<text x="970" y="197" font-size="29" fill="#111" stroke="#fff" stroke-width="0.52" text-anchor="start" style="font-family:'Liberation Sans',sans-serif;font-style:italic;" textLength="142" lengthAdjust="spacingAndGlyphs" transform="rotate(180 970 197)" >INT2021.00.010</text>
<text x="781" y="307" font-size="15" fill="#111" stroke="#fff" stroke-width="0.27" text-anchor="start" style="font-family:'Liberation Sans',sans-serif;font-style:italic;" textLength="70" lengthAdjust="spacingAndGlyphs" transform="rotate(-90 781 307)" >Перв. примен.</text>
<text x="781" y="671" font-size="15" fill="#111" stroke="#fff" stroke-width="0.27" text-anchor="start" style="font-family:'Liberation Sans',sans-serif;font-style:italic;" textLength="64" lengthAdjust="spacingAndGlyphs" transform="rotate(-90 781 671)" >Подп. и дата</text>
<text x="781" y="751.5" font-size="15" fill="#111" stroke="#fff" stroke-width="0.27" text-anchor="start" style="font-family:'Liberation Sans',sans-serif;font-style:italic;" textLength="60" lengthAdjust="spacingAndGlyphs" transform="rotate(-90 781 751.5)" >Инв. № дубл.</text>
<text x="781" y="815.5" font-size="15" fill="#111" stroke="#fff" stroke-width="0.27" text-anchor="start" style="font-family:'Liberation Sans',sans-serif;font-style:italic;" textLength="55" lengthAdjust="spacingAndGlyphs" transform="rotate(-90 781 815.5)" >Взам. инв. №</text>
<text x="781" y="910.5" font-size="15" fill="#111" stroke="#fff" stroke-width="0.27" text-anchor="start" style="font-family:'Liberation Sans',sans-serif;font-style:italic;" textLength="64" lengthAdjust="spacingAndGlyphs" transform="rotate(-90 781 910.5)" >Подп. и дата</text>
<text x="781" y="992.5" font-size="15" fill="#111" stroke="#fff" stroke-width="0.27" text-anchor="start" style="font-family:'Liberation Sans',sans-serif;font-style:italic;" textLength="63" lengthAdjust="spacingAndGlyphs" transform="rotate(-90 781 992.5)" >Инв. № подл.</text>
<path d="M1394 996.5 V842 H1915.5" stroke="#0a7cff" stroke-width="2" fill="none" />
<line x1="1414" y1="842" x2="1414" y2="913" stroke="#0a7cff" stroke-width="2" />
<line x1="1442" y1="842" x2="1442" y2="996.5" stroke="#0a7cff" stroke-width="2" />
<line x1="1507" y1="842" x2="1507" y2="996.5" stroke="#0a7cff" stroke-width="2" />
<line x1="1549" y1="842" x2="1549" y2="996.5" stroke="#0a7cff" stroke-width="2" />
<line x1="1578" y1="842" x2="1578" y2="996.5" stroke="#0a7cff" stroke-width="2" />
<line x1="1394" y1="857.5" x2="1578" y2="857.5" stroke="#000" stroke-width="1" />
<line x1="1394" y1="871.5" x2="1578" y2="871.5" stroke="#000" stroke-width="1" />
<line x1="1394" y1="885.5" x2="1578" y2="885.5" stroke="#000" stroke-width="1" />
<line x1="1394" y1="927.5" x2="1578" y2="927.5" stroke="#000" stroke-width="1" />
<line x1="1394" y1="941.5" x2="1578" y2="941.5" stroke="#000" stroke-width="1" />
<line x1="1394" y1="955.5" x2="1578" y2="955.5" stroke="#000" stroke-width="1" />
<line x1="1394" y1="969.5" x2="1578" y2="969.5" stroke="#000" stroke-width="1" />
<line x1="1394" y1="983.5" x2="1578" y2="983.5" stroke="#000" stroke-width="1" />
<line x1="1394" y1="899" x2="1578" y2="899" stroke="#0a7cff" stroke-width="2" />
<line x1="1394" y1="913" x2="1578" y2="913" stroke="#0a7cff" stroke-width="2" />
<line x1="1578" y1="885" x2="1915.5" y2="885" stroke="#0a7cff" stroke-width="2" />
<line x1="1578" y1="955" x2="1915.5" y2="955" stroke="#0a7cff" stroke-width="2" />
<line x1="1775" y1="885" x2="1775" y2="996.5" stroke="#0a7cff" stroke-width="2" />
<line x1="1775" y1="899" x2="1915.5" y2="899" stroke="#0a7cff" stroke-width="2" />
<line x1="1775" y1="940.5" x2="1915.5" y2="940.5" stroke="#0a7cff" stroke-width="2" />
<line x1="1816.5" y1="885" x2="1816.5" y2="940.5" stroke="#0a7cff" stroke-width="2" />
<line x1="1864.5" y1="885" x2="1864.5" y2="940.5" stroke="#0a7cff" stroke-width="2" />
<line x1="1832.5" y1="940.5" x2="1832.5" y2="955" stroke="#0a7cff" stroke-width="2" />
<line x1="1789.5" y1="899" x2="1789.5" y2="940" stroke="#000" stroke-width="1" />
<line x1="1803.5" y1="899" x2="1803.5" y2="940" stroke="#000" stroke-width="1" />
<text x="1396" y="911" font-size="11" fill="#111" stroke="#fff" stroke-width="0.20" text-anchor="start" style="font-family:'Liberation Sans',sans-serif;font-style:italic;" textLength="17" lengthAdjust="spacingAndGlyphs" >Изм.</text>
<text x="1417" y="911" font-size="11" fill="#111" stroke="#fff" stroke-width="0.20" text-anchor="start" style="font-family:'Liberation Sans',sans-serif;font-style:italic;" textLength="22" lengthAdjust="spacingAndGlyphs" >Лист</text>
<text x="1447" y="911" font-size="11" fill="#111" stroke="#fff" stroke-width="0.20" text-anchor="start" style="font-family:'Liberation Sans',sans-serif;font-style:italic;" textLength="55" lengthAdjust="spacingAndGlyphs" >№ докум.</text>
<text x="1517" y="911" font-size="11" fill="#111" stroke="#fff" stroke-width="0.20" text-anchor="start" style="font-family:'Liberation Sans',sans-serif;font-style:italic;" textLength="26" lengthAdjust="spacingAndGlyphs" >Подп.</text>
<text x="1551" y="911" font-size="11" fill="#111" stroke="#fff" stroke-width="0.20" text-anchor="start" style="font-family:'Liberation Sans',sans-serif;font-style:italic;" textLength="24" lengthAdjust="spacingAndGlyphs" >Дата</text>
<text x="1397" y="925" font-size="11" fill="#111" stroke="#fff" stroke-width="0.20" text-anchor="start" style="font-family:'Liberation Sans',sans-serif;font-style:italic;" textLength="34" lengthAdjust="spacingAndGlyphs" >Разраб.</text>
<text x="1444" y="925" font-size="11" fill="#111" stroke="#fff" stroke-width="0.20" text-anchor="start" style="font-family:'Liberation Sans',sans-serif;font-style:italic;" textLength="34" lengthAdjust="spacingAndGlyphs" >Иванов</text>
<text x="1397" y="939" font-size="11" fill="#111" stroke="#fff" stroke-width="0.20" text-anchor="start" style="font-family:'Liberation Sans',sans-serif;font-style:italic;" textLength="25" lengthAdjust="spacingAndGlyphs" >Пров.</text>
<text x="1444" y="939" font-size="11" fill="#111" stroke="#fff" stroke-width="0.20" text-anchor="start" style="font-family:'Liberation Sans',sans-serif;font-style:italic;" textLength="38" lengthAdjust="spacingAndGlyphs" >Сидоров</text>
<text x="1397" y="953" font-size="11" fill="#111" stroke="#fff" stroke-width="0.20" text-anchor="start" style="font-family:'Liberation Sans',sans-serif;font-style:italic;" textLength="40" lengthAdjust="spacingAndGlyphs" >Т.контр.</text>
<text x="1444" y="953" font-size="11" fill="#111" stroke="#fff" stroke-width="0.20" text-anchor="start" style="font-family:'Liberation Sans',sans-serif;font-style:italic;" textLength="32" lengthAdjust="spacingAndGlyphs" >Петров</text>
<text x="1397" y="981" font-size="11" fill="#111" stroke="#fff" stroke-width="0.20" text-anchor="start" style="font-family:'Liberation Sans',sans-serif;font-style:italic;" textLength="38" lengthAdjust="spacingAndGlyphs" >Н.контр.</text>
<text x="1444" y="981" font-size="11" fill="#111" stroke="#fff" stroke-width="0.20" text-anchor="start" style="font-family:'Liberation Sans',sans-serif;font-style:italic;" textLength="35" lengthAdjust="spacingAndGlyphs" >Волков</text>
<text x="1397" y="995" font-size="11" fill="#111" stroke="#fff" stroke-width="0.20" text-anchor="start" style="font-family:'Liberation Sans',sans-serif;font-style:italic;" textLength="20" lengthAdjust="spacingAndGlyphs" >Утв.</text>
<text x="1444" y="995" font-size="11" fill="#111" stroke="#fff" stroke-width="0.20" text-anchor="start" style="font-family:'Liberation Sans',sans-serif;font-style:italic;" textLength="31" lengthAdjust="spacingAndGlyphs" >Конев</text>
<text x="1786" y="897" font-size="11" fill="#111" stroke="#fff" stroke-width="0.20" text-anchor="start" style="font-family:'Liberation Sans',sans-serif;font-style:italic;" textLength="21" lengthAdjust="spacingAndGlyphs" >Лит.</text>
<text x="1825" y="897" font-size="11" fill="#111" stroke="#fff" stroke-width="0.20" text-anchor="start" style="font-family:'Liberation Sans',sans-serif;font-style:italic;" textLength="32" lengthAdjust="spacingAndGlyphs" >Масса</text>
<text x="1867" y="897" font-size="11" fill="#111" stroke="#fff" stroke-width="0.20" text-anchor="start" style="font-family:'Liberation Sans',sans-serif;font-style:italic;" textLength="46" lengthAdjust="spacingAndGlyphs" >Масштаб</text>
<text x="1779" y="953" font-size="11" fill="#111" stroke="#fff" stroke-width="0.20" text-anchor="start" style="font-family:'Liberation Sans',sans-serif;font-style:italic;" textLength="30" lengthAdjust="spacingAndGlyphs" >Лист</text>
<text x="1838" y="953" font-size="11" fill="#111" stroke="#fff" stroke-width="0.20" text-anchor="start" style="font-family:'Liberation Sans',sans-serif;font-style:italic;" textLength="42" lengthAdjust="spacingAndGlyphs" >Листов</text>
<text x="1897" y="953" font-size="11" fill="#111" stroke="#fff" stroke-width="0.20" text-anchor="start" style="font-family:'Liberation Sans',sans-serif;font-style:italic;" textLength="5" lengthAdjust="spacingAndGlyphs" >1</text>
<text x="1674" y="872" font-size="23" fill="#111" stroke="#fff" stroke-width="0.41" text-anchor="start" style="font-family:'Liberation Sans',sans-serif;font-style:italic;" textLength="143" lengthAdjust="spacingAndGlyphs" >INT2021.00.010</text>
<text x="1649" y="933" font-size="36" fill="#111" stroke="#fff" stroke-width="0.65" text-anchor="start" style="font-family:'Liberation Sans',sans-serif;font-style:italic;" textLength="52" lengthAdjust="spacingAndGlyphs" >Вал</text>
<text x="1828" y="925" font-size="18" fill="#111" stroke="#fff" stroke-width="0.32" text-anchor="start" style="font-family:'Liberation Sans',sans-serif;font-style:italic;" textLength="21" lengthAdjust="spacingAndGlyphs" >0,8</text>
<text x="1883" y="925" font-size="18" fill="#111" stroke="#fff" stroke-width="0.32" text-anchor="start" style="font-family:'Liberation Sans',sans-serif;font-style:italic;" textLength="17" lengthAdjust="spacingAndGlyphs" >1:1</text>
<text x="1643" y="973" font-size="17" fill="#111" stroke="#fff" stroke-width="0.31" text-anchor="start" style="font-family:'Liberation Sans',sans-serif;font-style:italic;" textLength="66" lengthAdjust="spacingAndGlyphs" >Сталь 10</text>
<text x="1619" y="992" font-size="17" fill="#111" stroke="#fff" stroke-width="0.31" text-anchor="start" style="font-family:'Liberation Sans',sans-serif;font-style:italic;" textLength="112" lengthAdjust="spacingAndGlyphs" >ГОСТ 1050–2013</text>
<text x="1608" y="1008" font-size="12" fill="#111" stroke="#fff" stroke-width="0.20" text-anchor="start" style="font-family:'Liberation Sans',sans-serif;font-style:italic;" textLength="50" lengthAdjust="spacingAndGlyphs" >Копировал</text>
<text x="1806" y="1008" font-size="12" fill="#111" stroke="#fff" stroke-width="0.20" text-anchor="start" style="font-family:'Liberation Sans',sans-serif;font-style:italic;" textLength="35" lengthAdjust="spacingAndGlyphs" >Формат</text>
<text x="1863" y="1008" font-size="12" fill="#111" stroke="#fff" stroke-width="0.20" text-anchor="start" style="font-family:'Liberation Sans',sans-serif;font-style:italic;" textLength="12" lengthAdjust="spacingAndGlyphs" >А3</text>
<text x="1411" y="745" font-size="17" fill="#111" stroke="#fff" stroke-width="0.31" text-anchor="start" style="font-family:'Liberation Sans',sans-serif;font-style:italic;" textLength="177" lengthAdjust="spacingAndGlyphs" >1&#160; Улучшить 200...241 НВ</text>
<text x="1411" y="765" font-size="17" fill="#111" stroke="#fff" stroke-width="0.31" text-anchor="start" style="font-family:'Liberation Sans',sans-serif;font-style:italic;" textLength="467" lengthAdjust="spacingAndGlyphs" >2&#160; Неуказанные предельные отклонения размеров: отверстий Н14,</text>
<text x="1411" y="792" font-size="17" fill="#111" stroke="#fff" stroke-width="0.31" text-anchor="start" style="font-family:'Liberation Sans',sans-serif;font-style:italic;" textLength="158" lengthAdjust="spacingAndGlyphs" >валов h14, остальных ±</text>
<text x="1581" y="779" font-size="9" fill="#111" stroke="#fff" stroke-width="0.20" text-anchor="start" style="font-family:'Liberation Sans',sans-serif;font-style:italic;" textLength="16" lengthAdjust="spacingAndGlyphs" >IT14</text>
<line x1="1578" y1="784.5" x2="1596" y2="784.5" stroke="#000" stroke-width="1" />
<text x="1584" y="797" font-size="11" fill="#111" stroke="#fff" stroke-width="0.20" text-anchor="start" style="font-family:'Liberation Sans',sans-serif;font-style:italic;" textLength="7" lengthAdjust="spacingAndGlyphs" >2</text>
<text x="1598" y="792" font-size="17" fill="#111" stroke="#fff" stroke-width="0.31" text-anchor="start" style="font-family:'Liberation Sans',sans-serif;font-style:italic;" >.</text></svg>
<svg style="left:0;top:0" width="1920" height="1040" viewBox="0 0 1920 1040">
<rect x="969.5" y="461.5" width="541" height="110" fill="none" stroke="#000" stroke-width="1" stroke-dasharray="2,2"/>
<line x1="975" y1="516.5" x2="1510" y2="516.5" stroke="#ff8c1a" stroke-width="1.2" stroke-dasharray="16,5,3,5"/>
<line x1="891" y1="489.5" x2="1078" y2="489.5" stroke="#000" stroke-width="1" />
<line x1="891" y1="545.5" x2="1078" y2="545.5" stroke="#000" stroke-width="1" />
<line x1="922" y1="496.5" x2="1028" y2="496.5" stroke="#000" stroke-width="1" />
<line x1="922" y1="504.5" x2="980" y2="504.5" stroke="#000" stroke-width="1" />
<line x1="980.5" y1="316" x2="980.5" y2="660" stroke="#000" stroke-width="1" />
<line x1="985.5" y1="504" x2="985.5" y2="612" stroke="#000" stroke-width="1" />
<line x1="1022.5" y1="444" x2="1022.5" y2="504" stroke="#000" stroke-width="1" />
<line x1="1070.5" y1="538" x2="1070.5" y2="578" stroke="#000" stroke-width="1" />
<line x1="1078.5" y1="545" x2="1078.5" y2="660" stroke="#000" stroke-width="1" />
<line x1="1163.5" y1="516" x2="1163.5" y2="660" stroke="#000" stroke-width="1" />
<line x1="1234.5" y1="516" x2="1234.5" y2="660" stroke="#000" stroke-width="1" />
<line x1="1346.5" y1="516" x2="1346.5" y2="660" stroke="#000" stroke-width="1" />
<line x1="1414.5" y1="516" x2="1414.5" y2="660" stroke="#000" stroke-width="1" />
<line x1="1499.5" y1="316" x2="1499.5" y2="660" stroke="#000" stroke-width="1" />
<line x1="1346" y1="467.5" x2="1482" y2="467.5" stroke="#000" stroke-width="1" />
<line x1="1346" y1="566.5" x2="1482" y2="566.5" stroke="#000" stroke-width="1" />
<line x1="1499" y1="481.5" x2="1548" y2="481.5" stroke="#000" stroke-width="1" />
<line x1="1499" y1="552.5" x2="1548" y2="552.5" stroke="#000" stroke-width="1" />
<path d="M980 504 H1022 L1028 496 H1070.5 V538 H985 L980 532 Z" stroke="#0a7cff" stroke-width="2.2" fill="none" />
<line x1="985" y1="504" x2="985" y2="538" stroke="#0a7cff" stroke-width="2.2" />
<path d="M1070.5 497 H1078.5 M1070.5 535.5 H1075 Q1078 535.5 1078.5 540" stroke="#0a7cff" stroke-width="1.8" fill="none" />
<path d="M1078.5 489 H1163.5 V545 H1078.5 Z" stroke="#0a7cff" stroke-width="2.2" fill="none" />
<path d="M1164 479 L1168.5 474 H1234.5 V558.5 H1168.5 L1164 554 Z" stroke="#0a7cff" stroke-width="2.2" fill="none" />
<line x1="1168.5" y1="474" x2="1168.5" y2="558.5" stroke="#0a7cff" stroke-width="2.2" />
<path d="M1235 473 L1239.5 467 H1346.5 V566 H1239.5 L1235 560 Z" stroke="#0a7cff" stroke-width="2.2" fill="none" />
<line x1="1239.5" y1="467" x2="1239.5" y2="566" stroke="#0a7cff" stroke-width="2.2" />
<defs><pattern id="hat" patternUnits="userSpaceOnUse" width="4.5" height="4.5" patternTransform="rotate(45)"><line x1="0.5" y1="0" x2="0.5" y2="4.5" stroke="#000" stroke-width="1"/></pattern></defs>
<path d="M1243 469 H1337 V487 H1243 Z M1251 469 V481 H1330 V469 Z" fill="url(#hat)" fill-rule="evenodd"/>
<path d="M1243 468 V486 L1246 488 H1334 L1337 486 V468" stroke="#0a7cff" stroke-width="2.2" fill="none" />
<path d="M1251 469 V481 H1330 V469" stroke="#0a7cff" stroke-width="2.2" fill="none" />
<path d="M1346.5 474 H1414.5 V559 H1346.5" stroke="#0a7cff" stroke-width="2.2" fill="none" />
<path d="M1414.5 481 H1499 V552 H1414.5 Z" stroke="#0a7cff" stroke-width="2.2" fill="none" />
<circle cx="1414.5" cy="474" r="3" fill="#19e0f0"/><circle cx="1414.5" cy="559" r="3" fill="#19e0f0"/>
<line x1="1416" y1="474.5" x2="1592" y2="474.5" stroke="#00ff00" stroke-width="1" />
<line x1="1416" y1="558.5" x2="1592" y2="558.5" stroke="#00ff00" stroke-width="1" />
<line x1="1586.5" y1="474" x2="1586.5" y2="559" stroke="#00ff00" stroke-width="1" />
<polygon points="1585.4,475.0 1585.4,481.1 1584.5,481.1 1584.5,488.8 1588.5,488.8 1588.5,481.1 1587.6,481.1 1587.6,475.0" fill="#00ff00"/>
<polygon points="1585.4,558.0 1585.4,552.0 1584.5,552.0 1584.5,544.2 1588.5,544.2 1588.5,552.0 1587.6,552.0 1587.6,558.0" fill="#00ff00"/>
<text x="1576" y="556" font-size="17" fill="#00ff00" stroke="#fff" stroke-width="0.31" text-anchor="start" style="font-family:'Liberation Sans',sans-serif;font-style:italic;" textLength="42" lengthAdjust="spacingAndGlyphs" transform="rotate(-90 1576 556)" >⌀30h6</text>
<text x="1582" y="512" font-size="11" fill="#00ff00" stroke="#fff" stroke-width="0.20" text-anchor="start" style="font-family:'Liberation Sans',sans-serif;font-style:italic;" textLength="33" lengthAdjust="spacingAndGlyphs" transform="rotate(-90 1582 512)" >(-0,013)</text>
<line x1="1476.5" y1="412" x2="1476.5" y2="566" stroke="#000" stroke-width="1" />
<polygon points="1475.4,467.5 1475.4,473.0 1474.5,473.0 1474.5,480.0 1478.5,480.0 1478.5,473.0 1477.6,473.0 1477.6,467.5" fill="#000"/>
<polygon points="1475.4,565.5 1475.4,560.0 1474.5,560.0 1474.5,553.0 1478.5,553.0 1478.5,560.0 1477.6,560.0 1477.6,565.5" fill="#000"/>
<text x="1469" y="446" font-size="17" fill="#111" stroke="#fff" stroke-width="0.31" text-anchor="start" style="font-family:'Liberation Sans',sans-serif;font-style:italic;" textLength="28" lengthAdjust="spacingAndGlyphs" transform="rotate(-90 1469 446)" >⌀35</text>
<line x1="1542.5" y1="481" x2="1542.5" y2="552" stroke="#000" stroke-width="1" />
<polygon points="1540.9,481.5 1540.9,487.0 1540.0,487.0 1540.0,494.0 1544.0,494.0 1544.0,487.0 1543.1,487.0 1543.1,481.5" fill="#000"/>
<polygon points="1540.9,551.5 1540.9,546.0 1540.0,546.0 1540.0,539.0 1544.0,539.0 1544.0,546.0 1543.1,546.0 1543.1,551.5" fill="#000"/>
<text x="1534" y="531" font-size="17" fill="#111" stroke="#fff" stroke-width="0.31" text-anchor="start" style="font-family:'Liberation Sans',sans-serif;font-style:italic;" textLength="28" lengthAdjust="spacingAndGlyphs" transform="rotate(-90 1534 531)" >⌀25</text>
<line x1="980.5" y1="320.5" x2="1499.5" y2="320.5" stroke="#000" stroke-width="1" />
<polygon points="981.0,319.4 987.0,319.4 987.0,318.5 994.8,318.5 994.8,322.5 987.0,322.5 987.0,321.6 981.0,321.6" fill="#000"/>
<polygon points="1499.0,319.4 1493.0,319.4 1493.0,318.5 1485.2,318.5 1485.2,322.5 1493.0,322.5 1493.0,321.6 1499.0,321.6" fill="#000"/>
<text x="1228" y="314" font-size="19" fill="#111" stroke="#fff" stroke-width="0.34" text-anchor="start" style="font-family:'Liberation Sans',sans-serif;font-style:italic;" textLength="21" lengthAdjust="spacingAndGlyphs" >184</text>
<line x1="937" y1="449.5" x2="1022.5" y2="449.5" stroke="#000" stroke-width="1" />
<polygon points="981.0,448.4 986.5,448.4 986.5,447.5 993.5,447.5 993.5,451.5 986.5,451.5 986.5,450.6 981.0,450.6" fill="#000"/>
<polygon points="1022.0,448.4 1016.0,448.4 1016.0,447.5 1008.2,447.5 1008.2,451.5 1016.0,451.5 1016.0,450.6 1022.0,450.6" fill="#000"/>
<text x="946" y="441" font-size="17" fill="#111" stroke="#fff" stroke-width="0.31" text-anchor="start" style="font-family:'Liberation Sans',sans-serif;font-style:italic;" textLength="14" lengthAdjust="spacingAndGlyphs" >15</text>
<line x1="896.5" y1="489" x2="896.5" y2="545" stroke="#000" stroke-width="1" />
<polygon points="895.4,489.5 895.4,495.0 894.5,495.0 894.5,502.0 898.5,502.0 898.5,495.0 897.6,495.0 897.6,489.5" fill="#000"/>
<polygon points="895.4,544.5 895.4,539.0 894.5,539.0 894.5,532.0 898.5,532.0 898.5,539.0 897.6,539.0 897.6,544.5" fill="#000"/>
<text x="890" y="531" font-size="17" fill="#111" stroke="#fff" stroke-width="0.31" text-anchor="start" style="font-family:'Liberation Sans',sans-serif;font-style:italic;" textLength="30" lengthAdjust="spacingAndGlyphs" transform="rotate(-90 890 531)" >⌀20</text>
<line x1="927.5" y1="458" x2="927.5" y2="522" stroke="#000" stroke-width="1" />
<polygon points="926.4,496.0 926.4,490.5 925.5,490.5 925.5,483.5 929.5,483.5 929.5,490.5 928.6,490.5 928.6,496.0" fill="#000"/>
<polygon points="926.4,504.0 926.4,509.5 925.5,509.5 925.5,516.5 929.5,516.5 929.5,509.5 928.6,509.5 928.6,504.0" fill="#000"/>
<text x="920" y="474" font-size="17" fill="#111" stroke="#fff" stroke-width="0.31" text-anchor="start" style="font-family:'Liberation Sans',sans-serif;font-style:italic;" textLength="9" lengthAdjust="spacingAndGlyphs" transform="rotate(-90 920 474)" >3</text>
<line x1="1033" y1="573.5" x2="1098" y2="573.5" stroke="#000" stroke-width="1" />
<polygon points="1070.5,572.4 1065.0,572.4 1065.0,571.5 1058.0,571.5 1058.0,575.5 1065.0,575.5 1065.0,574.6 1070.5,574.6" fill="#000"/>
<polygon points="1078.5,572.4 1084.0,572.4 1084.0,571.5 1091.0,571.5 1091.0,575.5 1084.0,575.5 1084.0,574.6 1078.5,574.6" fill="#000"/>
<text x="1039" y="565" font-size="17" fill="#111" stroke="#fff" stroke-width="0.31" text-anchor="start" style="font-family:'Liberation Sans',sans-serif;font-style:italic;" textLength="9" lengthAdjust="spacingAndGlyphs" >3</text>
<line x1="891" y1="604.5" x2="1003" y2="604.5" stroke="#000" stroke-width="1" />
<polygon points="980.5,603.4 975.0,603.4 975.0,602.5 968.0,602.5 968.0,606.5 975.0,606.5 975.0,605.6 980.5,605.6" fill="#000"/>
<polygon points="985.5,603.4 991.0,603.4 991.0,602.5 998.0,602.5 998.0,606.5 991.0,606.5 991.0,605.6 985.5,605.6" fill="#000"/>
<text x="899" y="595" font-size="16" fill="#111" stroke="#fff" stroke-width="0.29" text-anchor="start" style="font-family:'Liberation Sans',sans-serif;font-style:italic;" textLength="47" lengthAdjust="spacingAndGlyphs" >1,6×45°</text>
<text x="897" y="621" font-size="16" fill="#111" stroke="#fff" stroke-width="0.29" text-anchor="start" style="font-family:'Liberation Sans',sans-serif;font-style:italic;" textLength="58" lengthAdjust="spacingAndGlyphs" >3 фаски</text>
<line x1="980.5" y1="653.5" x2="1078.5" y2="653.5" stroke="#000" stroke-width="1" />
<polygon points="981.0,651.9 987.0,651.9 987.0,651.0 994.8,651.0 994.8,655.0 987.0,655.0 987.0,654.1 981.0,654.1" fill="#000"/>
<polygon points="1078.0,651.9 1072.0,651.9 1072.0,651.0 1064.2,651.0 1064.2,655.0 1072.0,655.0 1072.0,654.1 1078.0,654.1" fill="#000"/>
<text x="1020" y="645" font-size="17" fill="#111" stroke="#fff" stroke-width="0.31" text-anchor="start" style="font-family:'Liberation Sans',sans-serif;font-style:italic;" textLength="19" lengthAdjust="spacingAndGlyphs" >35</text>
<line x1="1078.5" y1="653.5" x2="1163.5" y2="653.5" stroke="#000" stroke-width="1" />
<polygon points="1079.0,651.9 1085.0,651.9 1085.0,651.0 1092.8,651.0 1092.8,655.0 1085.0,655.0 1085.0,654.1 1079.0,654.1" fill="#000"/>
<polygon points="1163.0,651.9 1157.0,651.9 1157.0,651.0 1149.2,651.0 1149.2,655.0 1157.0,655.0 1157.0,654.1 1163.0,654.1" fill="#000"/>
<text x="1111" y="645" font-size="17" fill="#111" stroke="#fff" stroke-width="0.31" text-anchor="start" style="font-family:'Liberation Sans',sans-serif;font-style:italic;" textLength="19" lengthAdjust="spacingAndGlyphs" >30</text>
<line x1="1163.5" y1="653.5" x2="1234.5" y2="653.5" stroke="#000" stroke-width="1" />
<polygon points="1164.0,651.9 1170.0,651.9 1170.0,651.0 1177.8,651.0 1177.8,655.0 1170.0,655.0 1170.0,654.1 1164.0,654.1" fill="#000"/>
<polygon points="1234.0,651.9 1228.0,651.9 1228.0,651.0 1220.2,651.0 1220.2,655.0 1228.0,655.0 1228.0,654.1 1234.0,654.1" fill="#000"/>
<text x="1189" y="645" font-size="17" fill="#111" stroke="#fff" stroke-width="0.31" text-anchor="start" style="font-family:'Liberation Sans',sans-serif;font-style:italic;" textLength="19" lengthAdjust="spacingAndGlyphs" >25</text>
<line x1="1234.5" y1="653.5" x2="1346.5" y2="653.5" stroke="#000" stroke-width="1" />
<polygon points="1235.0,651.9 1241.0,651.9 1241.0,651.0 1248.8,651.0 1248.8,655.0 1241.0,655.0 1241.0,654.1 1235.0,654.1" fill="#000"/>
<polygon points="1346.0,651.9 1340.0,651.9 1340.0,651.0 1332.2,651.0 1332.2,655.0 1340.0,655.0 1340.0,654.1 1346.0,654.1" fill="#000"/>
<text x="1281" y="645" font-size="17" fill="#111" stroke="#fff" stroke-width="0.31" text-anchor="start" style="font-family:'Liberation Sans',sans-serif;font-style:italic;" textLength="19" lengthAdjust="spacingAndGlyphs" >40</text>
<line x1="1414.5" y1="654.5" x2="1499.5" y2="654.5" stroke="#000" stroke-width="1" />
<polygon points="1415.0,652.9 1421.0,652.9 1421.0,652.0 1428.8,652.0 1428.8,656.0 1421.0,656.0 1421.0,655.1 1415.0,655.1" fill="#000"/>
<polygon points="1499.0,652.9 1493.0,652.9 1493.0,652.0 1485.2,652.0 1485.2,656.0 1493.0,656.0 1493.0,655.1 1499.0,655.1" fill="#000"/>
<text x="1447" y="646" font-size="17" fill="#111" stroke="#fff" stroke-width="0.31" text-anchor="start" style="font-family:'Liberation Sans',sans-serif;font-style:italic;" textLength="19" lengthAdjust="spacingAndGlyphs" >30</text>
<path d="M1097.5 592 L1104.5 606.5 L1119.5 581.5 H1183" stroke="#000" stroke-width="1" fill="none" />
<path d="M1096 606.5 H1187.5 L1211 561" stroke="#000" stroke-width="1" fill="none" />
<polygon points="1212,559 1203,570 1207,572" fill="#000"/>
<text x="1123" y="600" font-size="17" fill="#111" stroke="#fff" stroke-width="0.31" text-anchor="start" style="font-family:'Liberation Sans',sans-serif;font-style:italic;" textLength="52" lengthAdjust="spacingAndGlyphs" >Ra 0,80</text>
<path d="M1357.5 591 L1365 606.5 L1380 581.5 H1432" stroke="#000" stroke-width="1" fill="none" />
<path d="M1435.5 606.5 H1356 L1333 566" stroke="#000" stroke-width="1" fill="none" />
<polygon points="1333,566 1337,578 1341,575" fill="#000"/>
<text x="1383" y="600" font-size="17" fill="#111" stroke="#fff" stroke-width="0.31" text-anchor="start" style="font-family:'Liberation Sans',sans-serif;font-style:italic;" textLength="40" lengthAdjust="spacingAndGlyphs" >Ra 1,6</text>
<rect x="1198.5" y="411.5" width="28" height="28" fill="none" stroke="#000" stroke-width="1"/>
<text x="1212.5" y="433" font-size="19" fill="#2020e0" stroke="#fff" stroke-width="0.34" text-anchor="middle" style="font-family:'Liberation Sans',sans-serif;font-style:italic;" textLength="12" lengthAdjust="spacingAndGlyphs" >Б</text>
<line x1="1212.5" y1="439.5" x2="1212.5" y2="462" stroke="#000" stroke-width="1" />
<polygon points="1212.5,461 1204,474 1221,474" fill="#000"/>
<line x1="1251.5" y1="410" x2="1251.5" y2="481" stroke="#000" stroke-width="1" />
<line x1="1330.5" y1="410" x2="1330.5" y2="481" stroke="#000" stroke-width="1" />
<line x1="1251.5" y1="415.5" x2="1434" y2="415.5" stroke="#000" stroke-width="1" />
<polygon points="1252.0,414.4 1258.0,414.4 1258.0,413.5 1265.8,413.5 1265.8,417.5 1258.0,417.5 1258.0,416.6 1252.0,416.6" fill="#000"/>
<polygon points="1330.0,414.4 1324.0,414.4 1324.0,413.5 1316.2,413.5 1316.2,417.5 1324.0,417.5 1324.0,416.6 1330.0,416.6" fill="#000"/>
<text x="1352" y="408" font-size="19" fill="#111" stroke="#fff" stroke-width="0.34" text-anchor="start" style="font-family:'Liberation Sans',sans-serif;font-style:italic;" textLength="40" lengthAdjust="spacingAndGlyphs" >28H15</text>
<text x="1398" y="397" font-size="10" fill="#111" stroke="#fff" stroke-width="0.20" text-anchor="start" style="font-family:'Liberation Sans',sans-serif;font-style:italic;" textLength="30" lengthAdjust="spacingAndGlyphs" >(+0,84)</text>
<polygon points="1288.5,369 1291.5,369 1291.5,402 1289,402" fill="#000"/>
<line x1="1291" y1="377" x2="1332" y2="376.5" stroke="#000" stroke-width="1" />
<polygon points="1292.0,375.9 1300.2,375.9 1300.2,375.0 1310.8,375.0 1310.8,379.0 1300.2,379.0 1300.2,378.1 1292.0,378.1" fill="#000"/>
<polygon points="1292.0,375.9 1297.0,375.9 1297.0,375.0 1303.2,375.0 1303.2,379.0 1297.0,379.0 1297.0,378.1 1292.0,378.1" fill="#000"/>
<text x="1313" y="368" font-size="38" fill="#0000ff" stroke="#fff" stroke-width="0.68" text-anchor="start" style="font-family:'Liberation Sans',sans-serif;" textLength="17" lengthAdjust="spacingAndGlyphs" >А</text>
<polygon points="1291.5,659 1294.5,659 1294,692 1291.5,692" fill="#000"/>
<line x1="1294" y1="683.5" x2="1336" y2="683" stroke="#000" stroke-width="1" />
<polygon points="1295.0,682.4 1303.2,682.4 1303.2,681.5 1313.8,681.5 1313.8,685.5 1303.2,685.5 1303.2,684.6 1295.0,684.6" fill="#000"/>
<polygon points="1295.0,682.4 1300.0,682.4 1300.0,681.5 1306.2,681.5 1306.2,685.5 1300.0,685.5 1300.0,684.6 1295.0,684.6" fill="#000"/>
<text x="1317" y="715" font-size="37" fill="#0000ff" stroke="#fff" stroke-width="0.67" text-anchor="start" style="font-family:'Liberation Sans',sans-serif;" textLength="16" lengthAdjust="spacingAndGlyphs" >А</text>
<line x1="980.5" y1="478" x2="980.5" y2="492" stroke="#333" stroke-width="1" />
<rect x="978" y="486" width="5" height="5" fill="none" stroke="#333" stroke-width="1"/>
<text x="977" y="483" font-size="9" fill="#444" stroke="#fff" stroke-width="0.20" text-anchor="start" style="font-family:'Liberation Sans',sans-serif;" textLength="7" lengthAdjust="spacingAndGlyphs" >Y</text>
<line x1="985" y1="516.5" x2="1014" y2="516.5" stroke="#333" stroke-width="1" />
<rect x="1005" y="514" width="6" height="5" fill="none" stroke="#333" stroke-width="1"/>
<text x="1013" y="516" font-size="11" fill="#444" stroke="#fff" stroke-width="0.20" text-anchor="start" style="font-family:'Liberation Sans',sans-serif;" textLength="8" lengthAdjust="spacingAndGlyphs" >X</text>
<path d="M1733 218.5 L1747 242.5 L1768.5 204.5 H1892.5" stroke="#0a7cff" stroke-width="1.6" fill="none" />
<text x="1771" y="237" font-size="27" fill="#111" stroke="#fff" stroke-width="0.49" text-anchor="start" style="font-family:'Liberation Sans',sans-serif;font-style:italic;" textLength="23" lengthAdjust="spacingAndGlyphs" >Ra</text>
<text x="1803" y="237" font-size="27" fill="#111" stroke="#fff" stroke-width="0.49" text-anchor="start" style="font-family:'Liberation Sans',sans-serif;font-style:italic;" textLength="29" lengthAdjust="spacingAndGlyphs" >3,2</text>
<text x="1841" y="235" font-size="24" fill="#111" stroke="#fff" stroke-width="0.43" text-anchor="start" style="font-family:'Liberation Sans',sans-serif;font-style:italic;" textLength="7" lengthAdjust="spacingAndGlyphs" >(</text>
<text x="1875" y="235" font-size="24" fill="#111" stroke="#fff" stroke-width="0.43" text-anchor="start" style="font-family:'Liberation Sans',sans-serif;font-style:italic;" textLength="7" lengthAdjust="spacingAndGlyphs" >)</text>
<path d="M1850 224.5 L1858.8 239.4 L1874.4 212.5" stroke="#000" stroke-width="1.2" fill="none" />
<text x="1710" y="413" font-size="34" fill="#111" stroke="#fff" stroke-width="0.61" text-anchor="start" style="font-family:'Liberation Sans',sans-serif;" textLength="53" lengthAdjust="spacingAndGlyphs" >А–А</text>
<rect x="1681.5" y="456.5" width="110" height="115" fill="none" stroke="#000" stroke-width="1" stroke-dasharray="2,2"/>
<defs><pattern id="hat2" patternUnits="userSpaceOnUse" width="4.2" height="4.2" patternTransform="rotate(45)"><line x1="0.5" y1="0" x2="0.5" y2="4.2" stroke="#000" stroke-width="0.9"/></pattern></defs>
<circle cx="1736.8" cy="516.6" r="49.3" fill="url(#hat2)" stroke="#000" stroke-width="2.2"/>
<rect x="1723" y="468" width="27.5" height="12.5" fill="#fff" stroke="#000" stroke-width="2"/>
<line x1="1681" y1="516.5" x2="1792" y2="516.5" stroke="#000" stroke-width="1" stroke-dasharray="30,4,2,4"/>
<line x1="1737.5" y1="460" x2="1737.5" y2="572" stroke="#000" stroke-width="1" stroke-dasharray="30,4,2,4"/>
<line x1="1723.5" y1="443" x2="1723.5" y2="481" stroke="#000" stroke-width="1" />
<line x1="1750.5" y1="443" x2="1750.5" y2="481" stroke="#000" stroke-width="1" />
<line x1="1702" y1="448.5" x2="1850" y2="448.5" stroke="#000" stroke-width="1" />
<polygon points="1722.5,446.9 1717.0,446.9 1717.0,446.0 1710.0,446.0 1710.0,450.0 1717.0,450.0 1717.0,449.1 1722.5,449.1" fill="#000"/>
<polygon points="1751.0,446.9 1756.5,446.9 1756.5,446.0 1763.5,446.0 1763.5,450.0 1756.5,450.0 1756.5,449.1 1751.0,449.1" fill="#000"/>
<text x="1774" y="438" font-size="15" fill="#111" stroke="#fff" stroke-width="0.27" text-anchor="start" style="font-family:'Liberation Sans',sans-serif;font-style:italic;" textLength="30" lengthAdjust="spacingAndGlyphs" >10N9</text>
<text x="1806" y="442" font-size="9" fill="#111" stroke="#fff" stroke-width="0.20" text-anchor="start" style="font-family:'Liberation Sans',sans-serif;font-style:italic;" textLength="46" lengthAdjust="spacingAndGlyphs" >(-0,036)</text>
<line x1="1750" y1="480.5" x2="1836" y2="480.5" stroke="#000" stroke-width="1" />
<line x1="1728" y1="565.5" x2="1836" y2="565.5" stroke="#000" stroke-width="1" />
<line x1="1830.5" y1="481" x2="1830.5" y2="566" stroke="#000" stroke-width="1" />
<polygon points="1829.4,481.5 1829.4,487.0 1828.5,487.0 1828.5,494.0 1832.5,494.0 1832.5,487.0 1831.6,487.0 1831.6,481.5" fill="#000"/>
<polygon points="1829.4,565.5 1829.4,560.0 1828.5,560.0 1828.5,553.0 1832.5,553.0 1832.5,560.0 1831.6,560.0 1831.6,565.5" fill="#000"/>
<text x="1822" y="533" font-size="17" fill="#111" stroke="#fff" stroke-width="0.31" text-anchor="start" style="font-family:'Liberation Sans',sans-serif;font-style:italic;" textLength="24" lengthAdjust="spacingAndGlyphs" transform="rotate(-90 1822 533)" >30</text>
</svg>
<div class="a" style="left:782px;top:144px;width:694px;height:27px;background:#f0f0f0;border:1px solid #8f8f8f;box-sizing:border-box"></div>
<div class="a" style="left:785px;top:148px;width:10px;height:7px;background-image:radial-gradient(circle,#444 0.9px,transparent 1px);background-size:3px 3px"></div>
<div class="a" style="left:798px;top:145px;width:48px;height:25px;background:#4a4a4a"></div>
<svg style="left:803px;top:149px" width="18" height="17" viewBox="0 0 18 17" fill="none" stroke="#fff" stroke-width="1"><path d="M3 15 L1 12 L10 3 A3.5 3.5 0 0 1 15 8 L6 17" stroke="#fff" stroke-width="3.2" fill="none"/><path d="M7 7 L11 11" stroke="#4a4a4a" stroke-width="1.2"/></svg>
<svg style="left:829px;top:154px" width="11" height="6" viewBox="0 0 11 6" fill="none" stroke="#1e1e1e" stroke-width="1"><path d="M0 0 H10 L5 5 Z" fill="#fff" stroke="none"/></svg>
<div class="a" style="left:846px;top:145px;width:1px;height:25px;background:#9a9a9a"></div>
<svg style="left:853px;top:149px" width="17" height="17" viewBox="0 0 17 17" fill="none" stroke="#1e1e1e" stroke-width="1"><path d="M1 9 L8 2 M3 11 L10 4 M10 15 H17 M13.5 15 V9"/></svg>
<svg style="left:880px;top:148px" width="18" height="18" viewBox="0 0 18 18" fill="none" stroke="#1e1e1e" stroke-width="1"><path d="M1 14 L8 7 M3 16 L10 9 M10 16 H17 M13.5 16 V10"/><path d="M8 5 Q12 0 16 5 Q12 9 8 5 Z" fill="#1e1e1e"/><circle cx="12" cy="5" r="1.2" fill="#fff" stroke="none"/></svg>
<div class="a" style="left:902px;top:145px;width:27px;height:25px;background:#e2e2e2"></div>
<svg style="left:908px;top:148px" width="18" height="18" viewBox="0 0 18 18" fill="none" stroke="#1e1e1e" stroke-width="1"><path d="M8 5 Q12.5 0 17 5 Q12.5 9 8 5 Z" fill="#1e1e1e"/><circle cx="12.5" cy="5" r="1.3" fill="#fff" stroke="none"/><path d="M3 9 V15 H9 M1.5 10.5 L3 9 L4.5 10.5 M7.5 13.5 L9 15 L7.5 16.5"/></svg>
<div class="a" style="left:929px;top:145px;width:1px;height:25px;background:#9a9a9a"></div>
<svg style="left:936px;top:149px" width="16" height="16" viewBox="0 0 16 16" fill="none" stroke="#1e1e1e" stroke-width="1"><path d="M4 1 V15 M8 1 V15 M12 1 V15 M1 4 H15 M1 8 H15 M1 12 H15" stroke-width="1.4"/></svg>
<svg style="left:963px;top:155px" width="11" height="6" viewBox="0 0 11 6" fill="none" stroke="#1e1e1e" stroke-width="1"><path d="M0 0 H10 L5 5 Z" fill="#1e1e1e" stroke="none"/></svg>
<svg style="left:980px;top:148px" width="19" height="19" viewBox="0 0 19 19" fill="none" stroke="#1e1e1e" stroke-width="1"><path d="M4 2 V15 H17 M2.5 4 L4 1.5 L5.5 4 M14.5 13.5 L17 15 L14.5 16.5"/><circle cx="4" cy="15" r="1.6" fill="#f0f0f0"/></svg>
<div class="t" style="left:999px;top:151px;font-size:12px;color:#222">СК 0</div>
<svg style="left:1044px;top:155px" width="11" height="6" viewBox="0 0 11 6" fill="none" stroke="#1e1e1e" stroke-width="1"><path d="M0 0 H10 L5 5 Z" fill="#1e1e1e" stroke="none"/></svg>
<div class="a" style="left:1059px;top:145px;width:28px;height:25px;background:#ececec"></div>
<svg style="left:1065px;top:149px" width="16" height="16" viewBox="0 0 16 16" fill="none" stroke="#1e1e1e" stroke-width="1"><path d="M1 15 H6 V2 H15" stroke-width="1.2"/></svg>
<div class="a" style="left:1087px;top:145px;width:26px;height:25px;background:#4a4a4a"></div>
<svg style="left:1091px;top:149px" width="18" height="17" viewBox="0 0 18 17" fill="none" stroke="#fff" stroke-width="1"><circle cx="3" cy="12" r="2" stroke="#fff"/><circle cx="15" cy="4" r="2" stroke="#fff"/><path d="M4.5 11 L13.5 5" stroke="#fff"/><path d="M3 1.5 L5 3.5 L3 5.5 L1 3.5 Z M15 11 L17 13 L15 15 L13 13 Z" stroke="#fff"/></svg>
<div class="a" style="left:1113px;top:145px;width:71px;height:25px;background:#fff"></div>
<svg style="left:1116px;top:148px" width="18" height="18" viewBox="0 0 18 18" fill="none" stroke="#1e1e1e" stroke-width="1"><path d="M2 5 V17 M15 5 V17 M2 15 H15 M12.5 13.5 L15 15 L12.5 16.5 M4.5 13.5 L2 15 L4.5 16.5 M2 1 L2 4 M0.5 2.5 H3.5 M15 1 V4 M13.5 2.5 H16.5"/></svg>
<div class="t" style="left:1137px;top:151px;font-size:12px;color:#222">1</div>
<svg style="left:1169px;top:155px" width="11" height="6" viewBox="0 0 11 6" fill="none" stroke="#1e1e1e" stroke-width="1"><path d="M0 0 H10 L5 5 Z" fill="#1e1e1e" stroke="none"/></svg>
<div class="a" style="left:1184px;top:145px;width:49px;height:25px;background:#ececec"></div>
<svg style="left:1189px;top:148px" width="18" height="18" viewBox="0 0 18 18" fill="none" stroke="#1e1e1e" stroke-width="1"><circle cx="7" cy="7" r="5"/><path d="M10.5 10.5 L15 15" stroke-width="2"/><path d="M11 1 H16 V7" stroke-dasharray="1.5,1"/></svg>
<svg style="left:1217px;top:155px" width="11" height="6" viewBox="0 0 11 6" fill="none" stroke="#1e1e1e" stroke-width="1"><path d="M0 0 H10 L5 5 Z" fill="#1e1e1e" stroke="none"/></svg>
<svg style="left:1235px;top:148px" width="17" height="18" viewBox="0 0 17 18" fill="none" stroke="#1e1e1e" stroke-width="1"><circle cx="7" cy="7" r="5.5"/><path d="M11 11 L15.5 15.5" stroke-width="2"/><path d="M4 7 H10 M7 4 V10"/></svg>
<div class="t" style="left:1256px;top:151px;font-size:12px;color:#222;width:24px;overflow:hidden">0.746</div>
<svg style="left:1288px;top:155px" width="11" height="6" viewBox="0 0 11 6" fill="none" stroke="#1e1e1e" stroke-width="1"><path d="M0 0 H10 L5 5 Z" fill="#1e1e1e" stroke="none"/></svg>
<div class="a" style="left:1304px;top:145px;width:14px;height:25px;background:#dcdcdc"></div>
<div class="t" style="left:1306px;top:151px;font-size:12px;color:#555">X</div>
<div class="a" style="left:1318px;top:145px;width:44px;height:25px;background:#fff"></div>
<div class="t" style="left:1320px;top:151px;font-size:12px;color:#222;width:42px;overflow:hidden">-7.24524</div>
<div class="a" style="left:1362px;top:145px;width:13px;height:25px;background:#dcdcdc"></div>
<div class="t" style="left:1364px;top:151px;font-size:12px;color:#555">Y</div>
<div class="a" style="left:1375px;top:145px;width:44px;height:25px;background:#fff"></div>
<div class="t" style="left:1379px;top:151px;font-size:12px;color:#222;width:39px;overflow:hidden">121.9097</div>
<svg style="left:1425px;top:148px" width="17" height="18" viewBox="0 0 17 18" fill="none" stroke="#1e1e1e" stroke-width="1"><path d="M1 2 H16 M4 2 V9 M13 2 V16 M10 2 V16" /><rect x="1" y="11" width="6" height="5"/><path d="M1 13.5 H7 M4 11 V16"/></svg>
<svg style="left:1454px;top:148px" width="17" height="18" viewBox="0 0 17 18" fill="none" stroke="#1e1e1e" stroke-width="1"><path d="M1 17 L2 13 L10 5 L12 7 L4 15 Z"/><path d="M9 4 L13 8 L16 5 A2 2 0 0 0 12 1 Z" fill="#1e1e1e"/></svg>
<div class="a dlg"></div>
<div class="a" style="left:343px;top:298px;width:500px;height:30px;background:#fff"></div>
<div class="t" style="left:351px;top:306px;font-size:12px;color:#111">Размерный текст</div>
<svg style="left:822px;top:306px" width="12" height="12"><path d="M0.5 0.5 L11.5 11.5 M11.5 0.5 L0.5 11.5" stroke="#222" stroke-width="1.1"/></svg>
<div class="a" style="left:343px;top:328px;width:499px;height:30px;background:#efefef"></div>
<div class="a" style="left:343px;top:358px;width:499px;height:1px;background:#8a8a8a"></div>
<div class="a" style="left:343px;top:359px;width:499px;height:5px;background:#efefef"></div>
<div class="a" style="left:695px;top:331px;width:63px;height:28px;background:#fff;border:1px solid #8a8a8a;border-bottom:none;box-sizing:border-box"></div>
<svg style="left:0;top:0" width="1920" height="1040">
<text x="349" y="352" font-size="15" font-weight="bold" fill="#111" textLength="16" lengthAdjust="spacingAndGlyphs" style="font-family:'Liberation Sans',sans-serif">55</text>
<text x="385" y="352" font-size="15" font-weight="bold" fill="#111" textLength="22" lengthAdjust="spacingAndGlyphs" style="font-family:'Liberation Sans',sans-serif">(55)</text>
<rect x="428.5" y="338.5" width="19" height="14" fill="none" stroke="#111" stroke-width="1.2"/>
<text x="430" y="351" font-size="14" font-weight="bold" fill="#111" textLength="15" lengthAdjust="spacingAndGlyphs" style="font-family:'Liberation Sans',sans-serif">55</text>
<text x="469" y="352" font-size="15" font-weight="bold" fill="#111" textLength="40" lengthAdjust="spacingAndGlyphs" style="font-family:'Liberation Sans',sans-serif">55±0,5</text>
<text x="530" y="352" font-size="15" font-weight="bold" fill="#111" textLength="37" lengthAdjust="spacingAndGlyphs" style="font-family:'Liberation Sans',sans-serif">55 H7</text>
<text x="588" y="352" font-size="15" font-weight="bold" fill="#111" textLength="16" lengthAdjust="spacingAndGlyphs" style="font-family:'Liberation Sans',sans-serif">55</text>
<text x="609" y="344" font-size="9" font-weight="normal" fill="#111" textLength="10" lengthAdjust="spacingAndGlyphs" style="font-family:'Liberation Sans',sans-serif">H7</text>
<text x="609" y="352" font-size="9" font-weight="normal" fill="#111" textLength="10" lengthAdjust="spacingAndGlyphs" style="font-family:'Liberation Sans',sans-serif">k6</text>
<text x="643" y="352" font-size="15" font-weight="bold" fill="#111" textLength="16" lengthAdjust="spacingAndGlyphs" style="font-family:'Liberation Sans',sans-serif">55</text>
<text x="661" y="344" font-size="7" font-weight="bold" fill="#111" textLength="17" lengthAdjust="spacingAndGlyphs" style="font-family:'Liberation Sans',sans-serif">+0.07</text>
<text x="661" y="352" font-size="7" font-weight="bold" fill="#111" textLength="17" lengthAdjust="spacingAndGlyphs" style="font-family:'Liberation Sans',sans-serif">-0.03</text>
<text x="699" y="352" font-size="15" font-weight="bold" fill="#111" textLength="29" lengthAdjust="spacingAndGlyphs" style="font-family:'Liberation Sans',sans-serif">55n7</text>
<text x="732" y="344" font-size="7" font-weight="bold" fill="#111" textLength="19" lengthAdjust="spacingAndGlyphs" style="font-family:'Liberation Sans',sans-serif">(+0.05</text>
<text x="732" y="352" font-size="7" font-weight="bold" fill="#111" textLength="19" lengthAdjust="spacingAndGlyphs" style="font-family:'Liberation Sans',sans-serif">+0.02)</text>
<text x="772" y="352" font-size="15" font-weight="bold" fill="#111" textLength="37" lengthAdjust="spacingAndGlyphs" style="font-family:'Liberation Sans',sans-serif">2×45°</text>
</svg>
<div class="a" style="left:343px;top:364px;width:499px;height:146px;background:#d3d3d3"></div>
<div class="a" style="left:343px;top:510px;width:499px;height:1px;background:#9c9c9c"></div>
<div class="a" style="left:343px;top:511px;width:499px;height:1px;background:#fafafa"></div>
<div class="a" style="left:351px;top:439px;width:36px;height:28px;background:#ebebeb"></div>
<div class="a" style="left:800px;top:439px;width:36px;height:28px;background:#ebebeb"></div>
<div class="a" style="left:355px;top:372px;width:3px;height:95px;background:#000"></div>
<div class="a" style="left:829px;top:372px;width:3px;height:95px;background:#000"></div>
<svg style="left:355px;top:445px" width="478" height="16"><line x1="3" y1="8.5" x2="474" y2="8.5" stroke="#000" stroke-width="1"/><polygon points="3,8.5 16,4.5 16,12.5" fill="#000"/><polygon points="474,8.5 461,4.5 461,12.5" fill="#000"/></svg>
<svg style="left:368px;top:380px" width="12" height="43"><path d="M11 2 H4 V41 H11" stroke="#9a9a9a" stroke-width="4" fill="none"/></svg>
<svg style="left:804px;top:380px" width="12" height="43"><path d="M1 2 H8 V41 H1" stroke="#9a9a9a" stroke-width="4" fill="none"/></svg>
<div class="ib" style="left:388px;top:396px;width:26px;height:21px"></div>
<div class="ib" style="left:418px;top:396px;width:59px;height:21px"></div>
<div class="ib" style="left:525px;top:396px;width:63px;height:21px"></div>
<div class="ib" style="left:592px;top:396px;width:30px;height:21px"></div>
<div class="ib" style="left:726px;top:396px;width:33px;height:21px"></div>
<div class="ib" style="left:763px;top:380px;width:39px;height:21px"></div>
<div class="ib" style="left:482px;top:396px;width:38px;height:21px"></div>
<svg style="left:485px;top:399px" width="16" height="16"><ellipse cx="7" cy="8" rx="5.2" ry="5.2" fill="none" stroke="#111" stroke-width="1.1"/><line x1="3" y1="15" x2="12" y2="1" stroke="#111" stroke-width="1.1"/></svg>
<svg style="left:505px;top:403px" width="10" height="6"><path d="M0.5 0.5 L4.5 4.5 L8.5 0.5" stroke="#333" fill="none"/></svg>
<div class="dt" style="left:528px;top:400px">30</div>
<div class="a" style="left:525px;top:418px;width:63px;height:3px;background:#a8a8a8"></div>
<div class="dt" style="left:595px;top:400px">h6</div>
<div class="t" style="left:623px;top:378px;font-size:44px;color:#000;font-family:'Liberation Sans',sans-serif;line-height:50px">(</div>
<div class="t" style="left:684px;top:378px;font-size:44px;color:#000;line-height:50px">)</div>
<div class="a" style="left:643px;top:383px;width:37px;height:19px;background:#dedede;border:1px solid #ececec;box-sizing:border-box"></div>
<div class="a" style="left:643px;top:408px;width:37px;height:19px;background:#dedede;border:1px solid #ececec;box-sizing:border-box"></div>
<div class="dt" style="left:646px;top:410px;color:#9a9a9a">-0,013</div>
<div class="a" style="left:701px;top:397px;width:21px;height:21px;background:#dcdcdc;border:1px solid #ececec;box-sizing:border-box"></div>
<svg style="left:703px;top:399px" width="17" height="17"><circle cx="8.5" cy="8.5" r="7" stroke="#999" fill="none"/><text x="5" y="13" font-size="11" fill="#999" style="font-family:'Liberation Sans',sans-serif">E</text></svg>
<div class="a" style="left:389px;top:422px;width:92px;height:18px;background:#e1e1e1;border:1px solid #b5b5b5;box-sizing:border-box"></div>
<div class="dt" style="left:406px;top:425px">Количество</div>
<div class="a" style="left:593px;top:422px;width:33px;height:16px;background:#e1e1e1;border:1px solid #b5b5b5;box-sizing:border-box"></div>
<div class="dt" style="left:595px;top:424px">Класс</div>
<div class="a" style="left:517px;top:487px;width:13px;height:13px;background:#fff;border:1px solid #333;box-sizing:border-box"></div>
<div class="dt" style="left:533px;top:487px">Под размерной линией</div>
<div class="dt" style="left:779px;top:525px">Точность:</div>
<div class="a" style="left:773px;top:539px;width:59px;height:21px;background:#e5e5e5;border:1px solid #adadad;box-sizing:border-box"></div>
<div class="dt" style="left:776px;top:543px">0.00</div>
<svg style="left:818px;top:547px" width="10" height="6"><path d="M0.5 0.5 L4.5 4.5 L8.5 0.5" stroke="#333" fill="none"/></svg>
<div class="a" style="left:673px;top:594px;width:73px;height:21px;background:#e1e1e1;border:2px solid #0078d7;box-sizing:border-box"></div>
<div class="dt" style="left:701px;top:598px">OK</div>
<div class="a" style="left:757px;top:594px;width:73px;height:21px;background:#e1e1e1;border:1px solid #adadad;box-sizing:border-box"></div>
<div class="dt" style="left:774px;top:598px">Отмена</div>
<div class="a" style="left:352px;top:594px;width:22px;height:21px;background:#e1e1e1;border:1px solid #c4c4c4;box-sizing:border-box"></div>
<svg style="left:355px;top:597px" width="17" height="15"><rect x="0.5" y="0.5" width="15" height="13" fill="#dfe9f5" stroke="#1d4f91"/><path d="M1 3 H4" stroke="#1d4f91" stroke-width="1.5"/><path d="M6 6 H13 M6 8.5 H13" stroke="#1d4f91"/><rect x="6" y="10" width="2" height="2.5" fill="#1d4f91"/><rect x="9" y="10" width="2" height="2.5" fill="#1d4f91"/><rect x="12" y="10" width="2" height="2.5" fill="#1d4f91"/></svg>
</body></html>
